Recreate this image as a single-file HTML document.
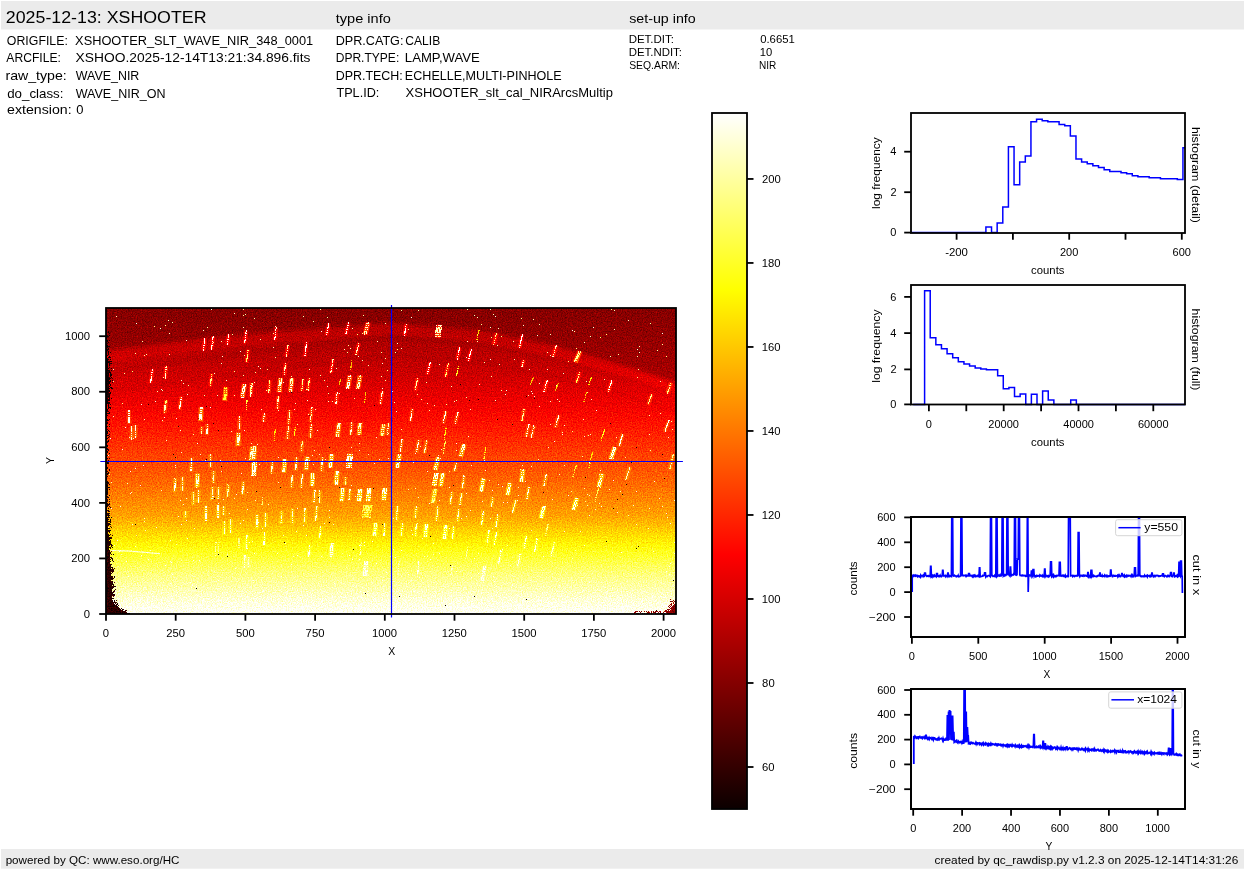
<!DOCTYPE html><html><head><meta charset="utf-8"><style>html,body{margin:0;padding:0;background:#fff;overflow:hidden}svg{display:block;will-change:transform}text{font-family:"Liberation Sans",sans-serif}</style></head><body>
<svg width="1245" height="870" viewBox="0 0 1245 870">
<rect x="0" y="0" width="1245" height="870" fill="#fff"/>
<rect x="1" y="1" width="1243" height="28.5" fill="#ebebeb"/>
<rect x="1" y="849" width="1243" height="19.7" fill="#ebebeb"/>
<text transform="translate(5.81,22.70) scale(1.0471,1)" font-size="17.00" fill="#000">2025-12-13: XSHOOTER</text>
<text transform="translate(335.78,22.80) scale(1.1548,1)" font-size="12.60" fill="#000">type info</text>
<text transform="translate(629.21,22.50) scale(1.1318,1)" font-size="12.60" fill="#000">set-up info</text>
<text transform="translate(6.86,45.20) scale(0.9798,1)" font-size="12.60" fill="#000">ORIGFILE:</text>
<text transform="translate(6.37,61.50) scale(0.9616,1)" font-size="12.60" fill="#000">ARCFILE:</text>
<text transform="translate(5.44,80.20) scale(1.1247,1)" font-size="12.60" fill="#000">raw_type:</text>
<text transform="translate(7.13,98.00) scale(1.0588,1)" font-size="12.60" fill="#000">do_class:</text>
<text transform="translate(7.10,113.60) scale(1.1246,1)" font-size="12.60" fill="#000">extension:</text>
<text transform="translate(75.11,45.20) scale(1.0172,1)" font-size="12.60" fill="#000">XSHOOTER_SLT_WAVE_NIR_348_0001</text>
<text transform="translate(75.49,61.50) scale(1.0964,1)" font-size="12.60" fill="#000">XSHOO.2025-12-14T13:21:34.896.fits</text>
<text transform="translate(75.74,80.20) scale(0.9881,1)" font-size="12.60" fill="#000">WAVE_NIR</text>
<text transform="translate(75.74,98.00) scale(0.9943,1)" font-size="12.60" fill="#000">WAVE_NIR_ON</text>
<text transform="translate(76.18,113.60) scale(1.0305,1)" font-size="12.60" fill="#000">0</text>
<text transform="translate(335.66,44.80) scale(1.0017,1)" font-size="12.60" fill="#000">DPR.CATG:</text>
<text transform="translate(335.71,61.90) scale(0.9561,1)" font-size="12.60" fill="#000">DPR.TYPE:</text>
<text transform="translate(335.67,80.00) scale(0.9903,1)" font-size="12.60" fill="#000">DPR.TECH:</text>
<text transform="translate(336.42,96.60) scale(1.0049,1)" font-size="12.60" fill="#000">TPL.ID:</text>
<text transform="translate(405.30,44.80) scale(0.9595,1)" font-size="12.60" fill="#000">CALIB</text>
<text transform="translate(404.81,61.90) scale(1.0454,1)" font-size="12.60" fill="#000">LAMP,WAVE</text>
<text transform="translate(404.86,80.00) scale(0.9978,1)" font-size="12.60" fill="#000">ECHELLE,MULTI-PINHOLE</text>
<text transform="translate(405.61,96.60) scale(1.0317,1)" font-size="12.60" fill="#000">XSHOOTER_slt_cal_NIRArcsMultip</text>
<text transform="translate(628.65,43.10) scale(1.0487,1)" font-size="10.97" fill="#000">DET.DIT:</text>
<text transform="translate(628.66,56.10) scale(1.0424,1)" font-size="10.97" fill="#000">DET.NDIT:</text>
<text transform="translate(629.13,68.90) scale(0.9490,1)" font-size="10.97" fill="#000">SEQ.ARM:</text>
<text transform="translate(760.15,43.10) scale(1.0343,1)" font-size="10.97" fill="#000">0.6651</text>
<text transform="translate(759.76,56.10) scale(1.0235,1)" font-size="10.97" fill="#000">10</text>
<text transform="translate(758.97,68.90) scale(0.9159,1)" font-size="10.97" fill="#000">NIR</text>
<text transform="translate(5.64,864.10) scale(1.0029,1)" font-size="11.60" fill="#000">powered by QC: www.eso.org/HC</text>
<text transform="translate(934.60,864.00) scale(1.0223,1)" font-size="11.60" fill="#000">created by qc_rawdisp.py v1.2.3 on 2025-12-14T14:31:26</text>
<defs>
<linearGradient id="gimg" x1="0" y1="0" x2="0" y2="1">
<stop offset="0.0014" stop-color="#343434"/>
<stop offset="0.1112" stop-color="#3e3e3e"/>
<stop offset="0.2247" stop-color="#4b4b4b"/>
<stop offset="0.3373" stop-color="#5c5c5c"/>
<stop offset="0.4508" stop-color="#707070"/>
<stop offset="0.5642" stop-color="#838383"/>
<stop offset="0.6777" stop-color="#9b9b9b"/>
<stop offset="0.8184" stop-color="#cdcdcd"/>
<stop offset="0.8729" stop-color="#dfdfdf"/>
<stop offset="0.9546" stop-color="#f5f5f5"/>
<stop offset="1.0000" stop-color="#ffffff"/>
</linearGradient>
<linearGradient id="gcb" x1="0" y1="1" x2="0" y2="0">
<stop offset="0" stop-color="#0b0000"/>
<stop offset="0.365079" stop-color="#ff0000"/>
<stop offset="0.746032" stop-color="#ffff00"/>
<stop offset="1" stop-color="#ffffff"/>
</linearGradient>
<clipPath id="cimg"><rect x="106.0" y="308.0" width="570.0" height="306.0"/></clipPath>
<filter id="hotmap" filterUnits="userSpaceOnUse" x="106.0" y="308.0" width="570.0" height="306.0" color-interpolation-filters="sRGB">
<feTurbulence type="fractalNoise" baseFrequency="0.8" numOctaves="2" seed="4" result="noise"/>
<feColorMatrix in="noise" type="matrix" values="1 0 0 0 0 1 0 0 0 0 1 0 0 0 0 0 0 0 0 1" result="gn"/>
<feComposite in="SourceGraphic" in2="gn" operator="arithmetic" k1="0" k2="1" k3="0.24" k4="-0.12" result="val"/>
<feComponentTransfer in="val">
<feFuncR type="table" tableValues="0.0416 0.05189 0.06219 0.07248 0.08278 0.09307 0.1034 0.1137 0.124 0.1343 0.1445 0.1548 0.1651 0.1754 0.1857 0.196 0.2063 0.2166 0.2269 0.2372 0.2475 0.2578 0.2681 0.2784 0.2887 0.299 0.3093 0.3196 0.3299 0.3402 0.3504 0.3607 0.371 0.3813 0.3916 0.4019 0.4122 0.4225 0.4328 0.4431 0.4534 0.4637 0.474 0.4843 0.4946 0.5049 0.5152 0.5255 0.5358 0.546 0.5563 0.5666 0.5769 0.5872 0.5975 0.6078 0.6181 0.6284 0.6387 0.649 0.6593 0.6696 0.6799 0.6902 0.7005 0.7108 0.7211 0.7314 0.7416 0.7519 0.7622 0.7725 0.7828 0.7931 0.8034 0.8137 0.824 0.8343 0.8446 0.8549 0.8652 0.8755 0.8858 0.8961 0.9064 0.9167 0.927 0.9373 0.9475 0.9578 0.9681 0.9784 0.9887 0.999 1 1 1 1 1 1 1 1 1 1 1 1 1 1 1 1 1 1 1 1 1 1 1 1 1 1 1 1 1 1 1 1 1 1 1 1 1 1 1 1 1 1 1 1 1 1 1 1 1 1 1 1 1 1 1 1 1 1 1 1 1 1 1 1 1 1 1 1 1 1 1 1 1 1 1 1 1 1 1 1 1 1 1 1 1 1 1 1 1 1 1 1 1 1 1 1 1 1 1 1 1 1 1 1 1 1 1 1 1 1 1 1 1 1 1 1 1 1 1 1 1 1 1 1 1 1 1 1 1 1 1 1 1 1 1 1 1 1 1 1 1 1 1 1 1 1 1 1 1 1 1 1 1 1 1 1 1 1 1 1 1 1"/>
<feFuncG type="table" tableValues="0 0 0 0 0 0 0 0 0 0 0 0 0 0 0 0 0 0 0 0 0 0 0 0 0 0 0 0 0 0 0 0 0 0 0 0 0 0 0 0 0 0 0 0 0 0 0 0 0 0 0 0 0 0 0 0 0 0 0 0 0 0 0 0 0 0 0 0 0 0 0 0 0 0 0 0 0 0 0 0 0 0 0 0 0 0 0 0 0 0 0 0 0 0 0.009315 0.01961 0.0299 0.0402 0.05049 0.06079 0.07108 0.08137 0.09167 0.102 0.1123 0.1225 0.1328 0.1431 0.1534 0.1637 0.174 0.1843 0.1946 0.2049 0.2152 0.2255 0.2358 0.2461 0.2564 0.2667 0.277 0.2873 0.2975 0.3078 0.3181 0.3284 0.3387 0.349 0.3593 0.3696 0.3799 0.3902 0.4005 0.4108 0.4211 0.4314 0.4417 0.452 0.4623 0.4725 0.4828 0.4931 0.5034 0.5137 0.524 0.5343 0.5446 0.5549 0.5652 0.5755 0.5858 0.5961 0.6064 0.6167 0.627 0.6373 0.6475 0.6578 0.6681 0.6784 0.6887 0.699 0.7093 0.7196 0.7299 0.7402 0.7505 0.7608 0.7711 0.7814 0.7917 0.802 0.8123 0.8225 0.8328 0.8431 0.8534 0.8637 0.874 0.8843 0.8946 0.9049 0.9152 0.9255 0.9358 0.9461 0.9564 0.9667 0.977 0.9873 0.9975 1 1 1 1 1 1 1 1 1 1 1 1 1 1 1 1 1 1 1 1 1 1 1 1 1 1 1 1 1 1 1 1 1 1 1 1 1 1 1 1 1 1 1 1 1 1 1 1 1 1 1 1 1 1 1 1 1 1 1 1 1 1 1 1 1"/>
<feFuncB type="table" tableValues="0 0 0 0 0 0 0 0 0 0 0 0 0 0 0 0 0 0 0 0 0 0 0 0 0 0 0 0 0 0 0 0 0 0 0 0 0 0 0 0 0 0 0 0 0 0 0 0 0 0 0 0 0 0 0 0 0 0 0 0 0 0 0 0 0 0 0 0 0 0 0 0 0 0 0 0 0 0 0 0 0 0 0 0 0 0 0 0 0 0 0 0 0 0 0 0 0 0 0 0 0 0 0 0 0 0 0 0 0 0 0 0 0 0 0 0 0 0 0 0 0 0 0 0 0 0 0 0 0 0 0 0 0 0 0 0 0 0 0 0 0 0 0 0 0 0 0 0 0 0 0 0 0 0 0 0 0 0 0 0 0 0 0 0 0 0 0 0 0 0 0 0 0 0 0 0 0 0 0 0 0 0 0 0 0 0 0 0 0 0 0 0.01176 0.0272 0.04265 0.05809 0.07353 0.08897 0.1044 0.1199 0.1353 0.1507 0.1662 0.1816 0.1971 0.2125 0.2279 0.2434 0.2588 0.2743 0.2897 0.3051 0.3206 0.336 0.3515 0.3669 0.3824 0.3978 0.4132 0.4287 0.4441 0.4596 0.475 0.4904 0.5059 0.5213 0.5368 0.5522 0.5676 0.5831 0.5985 0.614 0.6294 0.6449 0.6603 0.6757 0.6912 0.7066 0.7221 0.7375 0.7529 0.7684 0.7838 0.7993 0.8147 0.8301 0.8456 0.861 0.8765 0.8919 0.9074 0.9228 0.9382 0.9537 0.9691 0.9846 1"/>
</feComponentTransfer>
</filter>
<filter id="blur1" x="-20%" y="-50%" width="140%" height="200%"><feGaussianBlur stdDeviation="1.5"/></filter>
<filter id="blur3" x="-20%" y="-50%" width="140%" height="200%"><feGaussianBlur stdDeviation="2.5"/></filter>
</defs>
<g clip-path="url(#cimg)"><g filter="url(#hotmap)">
<rect x="106.0" y="308.0" width="570.0" height="306.0" fill="url(#gimg)"/>
<path d="M90,300 L90,352 L106,350 L196,339 L275,331 L391,322 L481,330 L554,345 L626,366 L676,382 L690,390 L690,300 Z" fill="#282828" fill-opacity="0.4" filter="url(#blur1)"/>
<path d="M90,359 L106,357 L196,346 L275,338 L391,329 L481,337 L554,352 L626,373 L676,389 L690,397" fill="none" stroke="#fff" stroke-opacity="0.045" stroke-width="11" filter="url(#blur1)"/>
<path d="M90,374 L106,372 L196,360 L275,350 L391,337 L481,344 L554,359 L626,378 L676,394 L690,400" fill="none" stroke="#000" stroke-opacity="0.06" stroke-width="4" filter="url(#blur1)"/>
<path d="M90.0,394.0 L106.0,391.9 L196.0,379.5 L275.0,369.1 L391.0,355.5 L481.0,362.0 L554.0,376.7 L626.0,395.3 L676.0,411.1 L690.0,417.0" fill="none" stroke="#000" stroke-opacity="0.04" stroke-width="4" filter="url(#blur1)"/>
<path d="M106,330h1v1h-1zM106,331h1v1h-1zM108,331h1v1h-1zM108,332h1v1h-1zM106,333h1v1h-1zM109,333h1v1h-1zM106,335h1v1h-1zM107,335h1v1h-1zM109,335h1v1h-1zM106,336h1v1h-1zM107,336h1v1h-1zM108,336h1v1h-1zM106,337h1v1h-1zM106,338h1v1h-1zM106,340h1v1h-1zM107,340h1v1h-1zM109,340h1v1h-1zM107,341h1v1h-1zM108,342h1v1h-1zM107,343h1v1h-1zM106,344h1v1h-1zM106,345h1v1h-1zM107,345h1v1h-1zM106,346h1v1h-1zM107,346h1v1h-1zM108,346h1v1h-1zM109,346h1v1h-1zM107,347h1v1h-1zM106,348h1v1h-1zM108,348h1v1h-1zM106,349h1v1h-1zM107,349h1v1h-1zM108,349h1v1h-1zM106,350h1v1h-1zM107,350h1v1h-1zM106,351h1v1h-1zM108,351h1v1h-1zM106,352h1v1h-1zM108,352h1v1h-1zM110,352h1v1h-1zM106,353h1v1h-1zM108,353h1v1h-1zM106,354h1v1h-1zM108,354h1v1h-1zM106,355h1v1h-1zM107,355h1v1h-1zM106,356h1v1h-1zM109,356h1v1h-1zM106,357h1v1h-1zM108,357h1v1h-1zM109,357h1v1h-1zM110,357h1v1h-1zM106,358h1v1h-1zM107,358h1v1h-1zM106,359h1v1h-1zM107,359h1v1h-1zM108,359h1v1h-1zM110,359h1v1h-1zM106,360h1v1h-1zM107,360h1v1h-1zM106,361h1v1h-1zM107,361h1v1h-1zM108,361h1v1h-1zM109,361h1v1h-1zM110,361h1v1h-1zM111,361h1v1h-1zM106,362h1v1h-1zM107,362h1v1h-1zM108,362h1v1h-1zM109,362h1v1h-1zM106,363h1v1h-1zM107,363h1v1h-1zM109,363h1v1h-1zM110,363h1v1h-1zM111,363h1v1h-1zM106,364h1v1h-1zM107,364h1v1h-1zM109,364h1v1h-1zM106,365h1v1h-1zM107,365h1v1h-1zM109,365h1v1h-1zM106,366h1v1h-1zM107,366h1v1h-1zM106,367h1v1h-1zM107,367h1v1h-1zM109,367h1v1h-1zM106,368h1v1h-1zM107,368h1v1h-1zM108,368h1v1h-1zM111,368h1v1h-1zM106,369h1v1h-1zM107,369h1v1h-1zM106,370h1v1h-1zM107,370h1v1h-1zM108,370h1v1h-1zM109,370h1v1h-1zM111,370h1v1h-1zM106,371h1v1h-1zM107,371h1v1h-1zM108,371h1v1h-1zM109,371h1v1h-1zM106,372h1v1h-1zM107,372h1v1h-1zM108,372h1v1h-1zM109,372h1v1h-1zM110,372h1v1h-1zM106,373h1v1h-1zM107,373h1v1h-1zM108,373h1v1h-1zM110,373h1v1h-1zM106,374h1v1h-1zM107,374h1v1h-1zM108,374h1v1h-1zM110,374h1v1h-1zM111,374h1v1h-1zM106,375h1v1h-1zM107,375h1v1h-1zM108,375h1v1h-1zM110,375h1v1h-1zM111,375h1v1h-1zM106,376h1v1h-1zM107,376h1v1h-1zM108,376h1v1h-1zM110,376h1v1h-1zM106,377h1v1h-1zM107,377h1v1h-1zM108,377h1v1h-1zM109,377h1v1h-1zM111,377h1v1h-1zM106,378h1v1h-1zM107,378h1v1h-1zM108,378h1v1h-1zM109,378h1v1h-1zM110,378h1v1h-1zM112,378h1v1h-1zM106,379h1v1h-1zM107,379h1v1h-1zM108,379h1v1h-1zM109,379h1v1h-1zM106,380h1v1h-1zM107,380h1v1h-1zM108,380h1v1h-1zM110,380h1v1h-1zM112,380h1v1h-1zM106,381h1v1h-1zM107,381h1v1h-1zM108,381h1v1h-1zM109,381h1v1h-1zM110,381h1v1h-1zM106,382h1v1h-1zM107,382h1v1h-1zM108,382h1v1h-1zM109,382h1v1h-1zM112,382h1v1h-1zM106,383h1v1h-1zM107,383h1v1h-1zM108,383h1v1h-1zM109,383h1v1h-1zM106,384h1v1h-1zM107,384h1v1h-1zM108,384h1v1h-1zM110,384h1v1h-1zM106,385h1v1h-1zM107,385h1v1h-1zM108,385h1v1h-1zM110,385h1v1h-1zM106,386h1v1h-1zM107,386h1v1h-1zM108,386h1v1h-1zM109,386h1v1h-1zM106,387h1v1h-1zM107,387h1v1h-1zM108,387h1v1h-1zM110,387h1v1h-1zM111,387h1v1h-1zM106,388h1v1h-1zM107,388h1v1h-1zM108,388h1v1h-1zM109,388h1v1h-1zM111,388h1v1h-1zM112,388h1v1h-1zM106,389h1v1h-1zM107,389h1v1h-1zM108,389h1v1h-1zM106,390h1v1h-1zM107,390h1v1h-1zM108,390h1v1h-1zM109,390h1v1h-1zM106,391h1v1h-1zM107,391h1v1h-1zM108,391h1v1h-1zM109,391h1v1h-1zM106,392h1v1h-1zM107,392h1v1h-1zM108,392h1v1h-1zM110,392h1v1h-1zM106,393h1v1h-1zM107,393h1v1h-1zM108,393h1v1h-1zM109,393h1v1h-1zM110,393h1v1h-1zM106,394h1v1h-1zM107,394h1v1h-1zM108,394h1v1h-1zM109,394h1v1h-1zM106,395h1v1h-1zM107,395h1v1h-1zM108,395h1v1h-1zM109,395h1v1h-1zM106,396h1v1h-1zM107,396h1v1h-1zM108,396h1v1h-1zM109,396h1v1h-1zM106,397h1v1h-1zM107,397h1v1h-1zM108,397h1v1h-1zM109,397h1v1h-1zM106,398h1v1h-1zM107,398h1v1h-1zM109,398h1v1h-1zM111,398h1v1h-1zM106,399h1v1h-1zM107,399h1v1h-1zM108,399h1v1h-1zM109,399h1v1h-1zM106,400h1v1h-1zM107,400h1v1h-1zM108,400h1v1h-1zM109,400h1v1h-1zM106,401h1v1h-1zM107,401h1v1h-1zM106,402h1v1h-1zM107,402h1v1h-1zM108,402h1v1h-1zM109,402h1v1h-1zM106,403h1v1h-1zM107,403h1v1h-1zM108,403h1v1h-1zM109,403h1v1h-1zM106,404h1v1h-1zM108,404h1v1h-1zM110,404h1v1h-1zM106,405h1v1h-1zM108,405h1v1h-1zM106,406h1v1h-1zM108,406h1v1h-1zM106,407h1v1h-1zM108,407h1v1h-1zM109,407h1v1h-1zM110,407h1v1h-1zM106,408h1v1h-1zM108,408h1v1h-1zM110,408h1v1h-1zM106,409h1v1h-1zM107,409h1v1h-1zM106,410h1v1h-1zM107,410h1v1h-1zM106,411h1v1h-1zM107,411h1v1h-1zM108,411h1v1h-1zM106,412h1v1h-1zM109,412h1v1h-1zM106,413h1v1h-1zM107,413h1v1h-1zM108,413h1v1h-1zM109,413h1v1h-1zM106,414h1v1h-1zM107,415h1v1h-1zM107,419h1v1h-1zM109,419h1v1h-1zM106,420h1v1h-1zM107,420h1v1h-1zM108,420h1v1h-1zM107,422h1v1h-1zM106,423h1v1h-1zM107,423h1v1h-1zM109,424h1v1h-1zM106,426h1v1h-1zM107,426h1v1h-1zM109,426h1v1h-1zM106,427h1v1h-1zM107,429h1v1h-1zM106,430h1v1h-1zM108,430h1v1h-1zM106,431h1v1h-1zM107,431h1v1h-1zM109,431h1v1h-1zM107,432h1v1h-1zM106,433h1v1h-1zM107,433h1v1h-1zM106,434h1v1h-1zM109,434h1v1h-1zM106,435h1v1h-1zM107,435h1v1h-1zM108,435h1v1h-1zM106,436h1v1h-1zM109,436h1v1h-1zM108,437h1v1h-1zM106,438h1v1h-1zM107,438h1v1h-1zM106,439h1v1h-1zM108,440h1v1h-1zM106,441h1v1h-1zM107,441h1v1h-1zM108,441h1v1h-1zM106,442h1v1h-1zM107,442h1v1h-1zM106,443h1v1h-1zM106,444h1v1h-1zM106,445h1v1h-1zM107,445h1v1h-1zM107,446h1v1h-1zM106,448h1v1h-1zM107,448h1v1h-1zM107,449h1v1h-1zM108,449h1v1h-1zM106,450h1v1h-1zM108,450h1v1h-1zM106,451h1v1h-1zM107,451h1v1h-1zM107,452h1v1h-1zM106,453h1v1h-1zM109,453h1v1h-1zM106,454h1v1h-1zM106,455h1v1h-1zM107,455h1v1h-1zM106,456h1v1h-1zM106,457h1v1h-1zM106,458h1v1h-1zM107,458h1v1h-1zM109,458h1v1h-1zM106,459h1v1h-1zM106,460h1v1h-1zM108,460h1v1h-1zM107,461h1v1h-1zM107,462h1v1h-1zM108,462h1v1h-1zM107,463h1v1h-1zM108,463h1v1h-1zM106,465h1v1h-1zM106,466h1v1h-1zM106,467h1v1h-1zM107,467h1v1h-1zM106,468h1v1h-1zM107,468h1v1h-1zM106,469h1v1h-1zM109,469h1v1h-1zM109,470h1v1h-1zM106,471h1v1h-1zM107,471h1v1h-1zM108,472h1v1h-1zM107,473h1v1h-1zM108,473h1v1h-1zM107,474h1v1h-1zM109,474h1v1h-1zM107,476h1v1h-1zM106,477h1v1h-1zM106,478h1v1h-1zM106,479h1v1h-1zM107,481h1v1h-1zM106,482h1v1h-1zM107,482h1v1h-1zM108,482h1v1h-1zM107,483h1v1h-1zM108,483h1v1h-1zM106,484h1v1h-1zM107,484h1v1h-1zM109,484h1v1h-1zM106,485h1v1h-1zM107,485h1v1h-1zM106,486h1v1h-1zM107,486h1v1h-1zM107,487h1v1h-1zM108,487h1v1h-1zM109,487h1v1h-1zM106,488h1v1h-1zM107,488h1v1h-1zM106,489h1v1h-1zM107,489h1v1h-1zM109,489h1v1h-1zM107,490h1v1h-1zM106,491h1v1h-1zM107,491h1v1h-1zM106,492h1v1h-1zM107,492h1v1h-1zM106,493h1v1h-1zM107,493h1v1h-1zM106,494h1v1h-1zM107,494h1v1h-1zM109,495h1v1h-1zM106,496h1v1h-1zM107,496h1v1h-1zM107,497h1v1h-1zM108,497h1v1h-1zM106,498h1v1h-1zM107,499h1v1h-1zM109,499h1v1h-1zM107,500h1v1h-1zM106,501h1v1h-1zM107,501h1v1h-1zM109,501h1v1h-1zM106,502h1v1h-1zM106,503h1v1h-1zM107,503h1v1h-1zM109,503h1v1h-1zM106,504h1v1h-1zM107,504h1v1h-1zM108,504h1v1h-1zM109,504h1v1h-1zM106,505h1v1h-1zM107,505h1v1h-1zM108,505h1v1h-1zM106,506h1v1h-1zM107,506h1v1h-1zM109,506h1v1h-1zM106,507h1v1h-1zM110,507h1v1h-1zM106,508h1v1h-1zM108,508h1v1h-1zM106,509h1v1h-1zM106,510h1v1h-1zM107,510h1v1h-1zM108,510h1v1h-1zM106,511h1v1h-1zM108,511h1v1h-1zM109,511h1v1h-1zM106,512h1v1h-1zM106,513h1v1h-1zM107,513h1v1h-1zM108,513h1v1h-1zM109,513h1v1h-1zM106,514h1v1h-1zM107,514h1v1h-1zM108,514h1v1h-1zM106,515h1v1h-1zM107,515h1v1h-1zM108,515h1v1h-1zM109,515h1v1h-1zM106,516h1v1h-1zM108,516h1v1h-1zM106,517h1v1h-1zM107,517h1v1h-1zM108,517h1v1h-1zM109,517h1v1h-1zM111,517h1v1h-1zM106,518h1v1h-1zM107,518h1v1h-1zM106,519h1v1h-1zM107,519h1v1h-1zM108,519h1v1h-1zM110,519h1v1h-1zM106,520h1v1h-1zM107,520h1v1h-1zM110,520h1v1h-1zM106,521h1v1h-1zM107,521h1v1h-1zM108,521h1v1h-1zM109,521h1v1h-1zM110,521h1v1h-1zM106,522h1v1h-1zM107,522h1v1h-1zM110,522h1v1h-1zM106,523h1v1h-1zM107,523h1v1h-1zM108,523h1v1h-1zM109,523h1v1h-1zM106,524h1v1h-1zM107,524h1v1h-1zM108,524h1v1h-1zM109,524h1v1h-1zM110,524h1v1h-1zM106,525h1v1h-1zM107,525h1v1h-1zM108,525h1v1h-1zM106,526h1v1h-1zM107,526h1v1h-1zM110,526h1v1h-1zM106,527h1v1h-1zM107,527h1v1h-1zM108,527h1v1h-1zM111,527h1v1h-1zM106,528h1v1h-1zM107,528h1v1h-1zM108,528h1v1h-1zM109,528h1v1h-1zM106,529h1v1h-1zM107,529h1v1h-1zM106,530h1v1h-1zM107,530h1v1h-1zM108,530h1v1h-1zM109,530h1v1h-1zM110,530h1v1h-1zM106,531h1v1h-1zM107,531h1v1h-1zM108,531h1v1h-1zM109,531h1v1h-1zM106,532h1v1h-1zM107,532h1v1h-1zM109,532h1v1h-1zM106,533h1v1h-1zM107,533h1v1h-1zM106,534h1v1h-1zM107,534h1v1h-1zM108,534h1v1h-1zM110,534h1v1h-1zM106,535h1v1h-1zM107,535h1v1h-1zM108,535h1v1h-1zM109,535h1v1h-1zM112,535h1v1h-1zM106,536h1v1h-1zM107,536h1v1h-1zM108,536h1v1h-1zM106,537h1v1h-1zM107,537h1v1h-1zM108,537h1v1h-1zM109,537h1v1h-1zM110,537h1v1h-1zM111,537h1v1h-1zM106,538h1v1h-1zM107,538h1v1h-1zM108,538h1v1h-1zM109,538h1v1h-1zM110,538h1v1h-1zM111,538h1v1h-1zM106,539h1v1h-1zM107,539h1v1h-1zM108,539h1v1h-1zM109,539h1v1h-1zM106,540h1v1h-1zM107,540h1v1h-1zM108,540h1v1h-1zM110,540h1v1h-1zM106,541h1v1h-1zM107,541h1v1h-1zM108,541h1v1h-1zM109,541h1v1h-1zM110,541h1v1h-1zM106,542h1v1h-1zM107,542h1v1h-1zM108,542h1v1h-1zM109,542h1v1h-1zM110,542h1v1h-1zM106,543h1v1h-1zM107,543h1v1h-1zM108,543h1v1h-1zM109,543h1v1h-1zM110,543h1v1h-1zM106,544h1v1h-1zM107,544h1v1h-1zM108,544h1v1h-1zM109,544h1v1h-1zM110,544h1v1h-1zM111,544h1v1h-1zM106,545h1v1h-1zM107,545h1v1h-1zM108,545h1v1h-1zM109,545h1v1h-1zM111,545h1v1h-1zM112,545h1v1h-1zM106,546h1v1h-1zM107,546h1v1h-1zM108,546h1v1h-1zM111,546h1v1h-1zM106,547h1v1h-1zM107,547h1v1h-1zM108,547h1v1h-1zM109,547h1v1h-1zM110,547h1v1h-1zM112,547h1v1h-1zM106,548h1v1h-1zM107,548h1v1h-1zM108,548h1v1h-1zM110,548h1v1h-1zM106,549h1v1h-1zM107,549h1v1h-1zM108,549h1v1h-1zM106,550h1v1h-1zM107,550h1v1h-1zM108,550h1v1h-1zM109,550h1v1h-1zM110,550h1v1h-1zM111,550h1v1h-1zM106,551h1v1h-1zM107,551h1v1h-1zM108,551h1v1h-1zM109,551h1v1h-1zM111,551h1v1h-1zM106,552h1v1h-1zM107,552h1v1h-1zM108,552h1v1h-1zM109,552h1v1h-1zM110,552h1v1h-1zM106,553h1v1h-1zM107,553h1v1h-1zM108,553h1v1h-1zM109,553h1v1h-1zM110,553h1v1h-1zM106,554h1v1h-1zM107,554h1v1h-1zM108,554h1v1h-1zM109,554h1v1h-1zM111,554h1v1h-1zM113,554h1v1h-1zM106,555h1v1h-1zM107,555h1v1h-1zM108,555h1v1h-1zM109,555h1v1h-1zM106,556h1v1h-1zM107,556h1v1h-1zM108,556h1v1h-1zM109,556h1v1h-1zM106,557h1v1h-1zM107,557h1v1h-1zM108,557h1v1h-1zM109,557h1v1h-1zM110,557h1v1h-1zM111,557h1v1h-1zM106,558h1v1h-1zM107,558h1v1h-1zM108,558h1v1h-1zM109,558h1v1h-1zM111,558h1v1h-1zM112,558h1v1h-1zM106,559h1v1h-1zM107,559h1v1h-1zM108,559h1v1h-1zM109,559h1v1h-1zM110,559h1v1h-1zM112,559h1v1h-1zM106,560h1v1h-1zM107,560h1v1h-1zM108,560h1v1h-1zM109,560h1v1h-1zM112,560h1v1h-1zM106,561h1v1h-1zM107,561h1v1h-1zM108,561h1v1h-1zM109,561h1v1h-1zM110,561h1v1h-1zM113,561h1v1h-1zM106,562h1v1h-1zM107,562h1v1h-1zM108,562h1v1h-1zM109,562h1v1h-1zM111,562h1v1h-1zM106,563h1v1h-1zM107,563h1v1h-1zM108,563h1v1h-1zM109,563h1v1h-1zM106,564h1v1h-1zM107,564h1v1h-1zM108,564h1v1h-1zM109,564h1v1h-1zM110,564h1v1h-1zM111,564h1v1h-1zM106,565h1v1h-1zM107,565h1v1h-1zM108,565h1v1h-1zM109,565h1v1h-1zM110,565h1v1h-1zM106,566h1v1h-1zM107,566h1v1h-1zM108,566h1v1h-1zM109,566h1v1h-1zM110,566h1v1h-1zM106,567h1v1h-1zM107,567h1v1h-1zM108,567h1v1h-1zM109,567h1v1h-1zM110,567h1v1h-1zM111,567h1v1h-1zM112,567h1v1h-1zM106,568h1v1h-1zM107,568h1v1h-1zM108,568h1v1h-1zM109,568h1v1h-1zM110,568h1v1h-1zM112,568h1v1h-1zM114,568h1v1h-1zM106,569h1v1h-1zM107,569h1v1h-1zM108,569h1v1h-1zM109,569h1v1h-1zM110,569h1v1h-1zM111,569h1v1h-1zM112,569h1v1h-1zM113,569h1v1h-1zM106,570h1v1h-1zM107,570h1v1h-1zM108,570h1v1h-1zM109,570h1v1h-1zM110,570h1v1h-1zM111,570h1v1h-1zM112,570h1v1h-1zM113,570h1v1h-1zM106,571h1v1h-1zM107,571h1v1h-1zM108,571h1v1h-1zM109,571h1v1h-1zM110,571h1v1h-1zM111,571h1v1h-1zM112,571h1v1h-1zM113,571h1v1h-1zM106,572h1v1h-1zM107,572h1v1h-1zM108,572h1v1h-1zM109,572h1v1h-1zM110,572h1v1h-1zM112,572h1v1h-1zM106,573h1v1h-1zM107,573h1v1h-1zM108,573h1v1h-1zM109,573h1v1h-1zM110,573h1v1h-1zM111,573h1v1h-1zM106,574h1v1h-1zM107,574h1v1h-1zM108,574h1v1h-1zM109,574h1v1h-1zM110,574h1v1h-1zM106,575h1v1h-1zM107,575h1v1h-1zM108,575h1v1h-1zM109,575h1v1h-1zM110,575h1v1h-1zM106,576h1v1h-1zM107,576h1v1h-1zM108,576h1v1h-1zM109,576h1v1h-1zM110,576h1v1h-1zM111,576h1v1h-1zM112,576h1v1h-1zM114,576h1v1h-1zM106,577h1v1h-1zM107,577h1v1h-1zM108,577h1v1h-1zM109,577h1v1h-1zM110,577h1v1h-1zM111,577h1v1h-1zM112,577h1v1h-1zM114,577h1v1h-1zM106,578h1v1h-1zM107,578h1v1h-1zM108,578h1v1h-1zM109,578h1v1h-1zM110,578h1v1h-1zM111,578h1v1h-1zM112,578h1v1h-1zM113,578h1v1h-1zM106,579h1v1h-1zM107,579h1v1h-1zM108,579h1v1h-1zM109,579h1v1h-1zM110,579h1v1h-1zM111,579h1v1h-1zM112,579h1v1h-1zM106,580h1v1h-1zM107,580h1v1h-1zM108,580h1v1h-1zM109,580h1v1h-1zM110,580h1v1h-1zM106,581h1v1h-1zM107,581h1v1h-1zM108,581h1v1h-1zM109,581h1v1h-1zM110,581h1v1h-1zM111,581h1v1h-1zM112,581h1v1h-1zM106,582h1v1h-1zM107,582h1v1h-1zM108,582h1v1h-1zM109,582h1v1h-1zM110,582h1v1h-1zM111,582h1v1h-1zM112,582h1v1h-1zM114,582h1v1h-1zM106,583h1v1h-1zM107,583h1v1h-1zM108,583h1v1h-1zM109,583h1v1h-1zM110,583h1v1h-1zM111,583h1v1h-1zM112,583h1v1h-1zM106,584h1v1h-1zM107,584h1v1h-1zM108,584h1v1h-1zM109,584h1v1h-1zM110,584h1v1h-1zM111,584h1v1h-1zM112,584h1v1h-1zM113,584h1v1h-1zM106,585h1v1h-1zM107,585h1v1h-1zM108,585h1v1h-1zM109,585h1v1h-1zM110,585h1v1h-1zM111,585h1v1h-1zM113,585h1v1h-1zM106,586h1v1h-1zM107,586h1v1h-1zM108,586h1v1h-1zM109,586h1v1h-1zM110,586h1v1h-1zM111,586h1v1h-1zM112,586h1v1h-1zM113,586h1v1h-1zM114,586h1v1h-1zM115,586h1v1h-1zM106,587h1v1h-1zM107,587h1v1h-1zM108,587h1v1h-1zM109,587h1v1h-1zM110,587h1v1h-1zM111,587h1v1h-1zM112,587h1v1h-1zM113,587h1v1h-1zM106,588h1v1h-1zM107,588h1v1h-1zM108,588h1v1h-1zM109,588h1v1h-1zM110,588h1v1h-1zM111,588h1v1h-1zM112,588h1v1h-1zM106,589h1v1h-1zM107,589h1v1h-1zM108,589h1v1h-1zM109,589h1v1h-1zM110,589h1v1h-1zM111,589h1v1h-1zM115,589h1v1h-1zM106,590h1v1h-1zM107,590h1v1h-1zM108,590h1v1h-1zM109,590h1v1h-1zM110,590h1v1h-1zM111,590h1v1h-1zM114,590h1v1h-1zM106,591h1v1h-1zM107,591h1v1h-1zM108,591h1v1h-1zM109,591h1v1h-1zM110,591h1v1h-1zM111,591h1v1h-1zM113,591h1v1h-1zM114,591h1v1h-1zM106,592h1v1h-1zM107,592h1v1h-1zM108,592h1v1h-1zM109,592h1v1h-1zM110,592h1v1h-1zM111,592h1v1h-1zM112,592h1v1h-1zM113,592h1v1h-1zM106,593h1v1h-1zM107,593h1v1h-1zM108,593h1v1h-1zM109,593h1v1h-1zM110,593h1v1h-1zM111,593h1v1h-1zM112,593h1v1h-1zM106,594h1v1h-1zM107,594h1v1h-1zM108,594h1v1h-1zM109,594h1v1h-1zM110,594h1v1h-1zM111,594h1v1h-1zM112,594h1v1h-1zM113,594h1v1h-1zM114,594h1v1h-1zM106,595h1v1h-1zM107,595h1v1h-1zM108,595h1v1h-1zM109,595h1v1h-1zM110,595h1v1h-1zM111,595h1v1h-1zM112,595h1v1h-1zM113,595h1v1h-1zM114,595h1v1h-1zM106,596h1v1h-1zM107,596h1v1h-1zM108,596h1v1h-1zM109,596h1v1h-1zM110,596h1v1h-1zM111,596h1v1h-1zM113,596h1v1h-1zM106,597h1v1h-1zM107,597h1v1h-1zM108,597h1v1h-1zM109,597h1v1h-1zM110,597h1v1h-1zM111,597h1v1h-1zM106,598h1v1h-1zM107,598h1v1h-1zM108,598h1v1h-1zM109,598h1v1h-1zM110,598h1v1h-1zM111,598h1v1h-1zM112,598h1v1h-1zM113,598h1v1h-1zM106,599h1v1h-1zM107,599h1v1h-1zM108,599h1v1h-1zM109,599h1v1h-1zM110,599h1v1h-1zM111,599h1v1h-1zM106,600h1v1h-1zM107,600h1v1h-1zM108,600h1v1h-1zM109,600h1v1h-1zM110,600h1v1h-1zM111,600h1v1h-1zM112,600h1v1h-1zM114,600h1v1h-1zM116,600h1v1h-1zM106,601h1v1h-1zM107,601h1v1h-1zM108,601h1v1h-1zM109,601h1v1h-1zM110,601h1v1h-1zM111,601h1v1h-1zM112,601h1v1h-1zM114,601h1v1h-1zM106,602h1v1h-1zM107,602h1v1h-1zM108,602h1v1h-1zM109,602h1v1h-1zM110,602h1v1h-1zM111,602h1v1h-1zM112,602h1v1h-1zM113,602h1v1h-1zM114,602h1v1h-1zM115,602h1v1h-1zM116,602h1v1h-1zM106,603h1v1h-1zM107,603h1v1h-1zM108,603h1v1h-1zM109,603h1v1h-1zM110,603h1v1h-1zM111,603h1v1h-1zM112,603h1v1h-1zM113,603h1v1h-1zM115,603h1v1h-1zM117,603h1v1h-1zM106,604h1v1h-1zM107,604h1v1h-1zM108,604h1v1h-1zM109,604h1v1h-1zM110,604h1v1h-1zM111,604h1v1h-1zM112,604h1v1h-1zM113,604h1v1h-1zM114,604h1v1h-1zM116,604h1v1h-1zM117,604h1v1h-1zM106,605h1v1h-1zM107,605h1v1h-1zM108,605h1v1h-1zM109,605h1v1h-1zM110,605h1v1h-1zM111,605h1v1h-1zM112,605h1v1h-1zM113,605h1v1h-1zM114,605h1v1h-1zM115,605h1v1h-1zM116,605h1v1h-1zM118,605h1v1h-1zM106,606h1v1h-1zM107,606h1v1h-1zM108,606h1v1h-1zM109,606h1v1h-1zM110,606h1v1h-1zM111,606h1v1h-1zM112,606h1v1h-1zM113,606h1v1h-1zM114,606h1v1h-1zM115,606h1v1h-1zM116,606h1v1h-1zM117,606h1v1h-1zM106,607h1v1h-1zM107,607h1v1h-1zM108,607h1v1h-1zM109,607h1v1h-1zM110,607h1v1h-1zM111,607h1v1h-1zM112,607h1v1h-1zM113,607h1v1h-1zM114,607h1v1h-1zM115,607h1v1h-1zM116,607h1v1h-1zM117,607h1v1h-1zM118,607h1v1h-1zM106,608h1v1h-1zM107,608h1v1h-1zM108,608h1v1h-1zM109,608h1v1h-1zM110,608h1v1h-1zM111,608h1v1h-1zM112,608h1v1h-1zM113,608h1v1h-1zM114,608h1v1h-1zM115,608h1v1h-1zM116,608h1v1h-1zM117,608h1v1h-1zM118,608h1v1h-1zM119,608h1v1h-1zM121,608h1v1h-1zM106,609h1v1h-1zM107,609h1v1h-1zM108,609h1v1h-1zM109,609h1v1h-1zM110,609h1v1h-1zM111,609h1v1h-1zM112,609h1v1h-1zM113,609h1v1h-1zM114,609h1v1h-1zM115,609h1v1h-1zM116,609h1v1h-1zM117,609h1v1h-1zM118,609h1v1h-1zM119,609h1v1h-1zM120,609h1v1h-1zM122,609h1v1h-1zM123,609h1v1h-1zM106,610h1v1h-1zM107,610h1v1h-1zM108,610h1v1h-1zM109,610h1v1h-1zM110,610h1v1h-1zM111,610h1v1h-1zM112,610h1v1h-1zM113,610h1v1h-1zM114,610h1v1h-1zM115,610h1v1h-1zM116,610h1v1h-1zM117,610h1v1h-1zM118,610h1v1h-1zM119,610h1v1h-1zM120,610h1v1h-1zM121,610h1v1h-1zM122,610h1v1h-1zM125,610h1v1h-1zM126,610h1v1h-1zM106,611h1v1h-1zM107,611h1v1h-1zM108,611h1v1h-1zM109,611h1v1h-1zM110,611h1v1h-1zM111,611h1v1h-1zM112,611h1v1h-1zM113,611h1v1h-1zM114,611h1v1h-1zM115,611h1v1h-1zM116,611h1v1h-1zM117,611h1v1h-1zM118,611h1v1h-1zM119,611h1v1h-1zM120,611h1v1h-1zM121,611h1v1h-1zM122,611h1v1h-1zM123,611h1v1h-1zM124,611h1v1h-1zM125,611h1v1h-1zM106,612h1v1h-1zM107,612h1v1h-1zM108,612h1v1h-1zM109,612h1v1h-1zM110,612h1v1h-1zM111,612h1v1h-1zM112,612h1v1h-1zM113,612h1v1h-1zM114,612h1v1h-1zM115,612h1v1h-1zM116,612h1v1h-1zM117,612h1v1h-1zM118,612h1v1h-1zM119,612h1v1h-1zM120,612h1v1h-1zM121,612h1v1h-1zM122,612h1v1h-1zM123,612h1v1h-1zM124,612h1v1h-1zM125,612h1v1h-1zM126,612h1v1h-1zM106,613h1v1h-1zM107,613h1v1h-1zM108,613h1v1h-1zM109,613h1v1h-1zM110,613h1v1h-1zM111,613h1v1h-1zM112,613h1v1h-1zM113,613h1v1h-1zM114,613h1v1h-1zM115,613h1v1h-1zM116,613h1v1h-1zM117,613h1v1h-1zM118,613h1v1h-1zM119,613h1v1h-1zM120,613h1v1h-1zM121,613h1v1h-1zM122,613h1v1h-1zM123,613h1v1h-1zM124,613h1v1h-1zM125,613h1v1h-1zM126,613h1v1h-1zM127,613h1v1h-1zM128,613h1v1h-1zM129,613h1v1h-1z" fill="#000" fill-opacity="0.95"/>
<path d="M670,599h1v1h-1zM675,599h1v1h-1zM673,600h1v1h-1zM675,600h1v1h-1zM670,601h1v1h-1zM671,601h1v1h-1zM672,601h1v1h-1zM674,601h1v1h-1zM675,601h1v1h-1zM673,602h1v1h-1zM675,602h1v1h-1zM671,603h1v1h-1zM673,603h1v1h-1zM675,603h1v1h-1zM670,604h1v1h-1zM671,604h1v1h-1zM674,604h1v1h-1zM675,604h1v1h-1zM669,605h1v1h-1zM671,605h1v1h-1zM673,605h1v1h-1zM674,605h1v1h-1zM675,605h1v1h-1zM668,606h1v1h-1zM670,606h1v1h-1zM672,606h1v1h-1zM673,606h1v1h-1zM674,606h1v1h-1zM675,606h1v1h-1zM669,607h1v1h-1zM671,607h1v1h-1zM672,607h1v1h-1zM673,607h1v1h-1zM674,607h1v1h-1zM675,607h1v1h-1zM670,608h1v1h-1zM671,608h1v1h-1zM672,608h1v1h-1zM673,608h1v1h-1zM674,608h1v1h-1zM675,608h1v1h-1zM667,609h1v1h-1zM668,609h1v1h-1zM669,609h1v1h-1zM671,609h1v1h-1zM672,609h1v1h-1zM673,609h1v1h-1zM674,609h1v1h-1zM675,609h1v1h-1zM665,610h1v1h-1zM666,610h1v1h-1zM668,610h1v1h-1zM670,610h1v1h-1zM671,610h1v1h-1zM672,610h1v1h-1zM673,610h1v1h-1zM674,610h1v1h-1zM675,610h1v1h-1zM664,611h1v1h-1zM665,611h1v1h-1zM667,611h1v1h-1zM668,611h1v1h-1zM669,611h1v1h-1zM670,611h1v1h-1zM671,611h1v1h-1zM672,611h1v1h-1zM673,611h1v1h-1zM674,611h1v1h-1zM675,611h1v1h-1zM663,612h1v1h-1zM666,612h1v1h-1zM667,612h1v1h-1zM668,612h1v1h-1zM669,612h1v1h-1zM670,612h1v1h-1zM671,612h1v1h-1zM672,612h1v1h-1zM673,612h1v1h-1zM674,612h1v1h-1zM675,612h1v1h-1zM664,613h1v1h-1zM667,613h1v1h-1zM668,613h1v1h-1zM669,613h1v1h-1zM670,613h1v1h-1zM671,613h1v1h-1zM672,613h1v1h-1zM673,613h1v1h-1zM674,613h1v1h-1zM675,613h1v1h-1zM634,612h1v1h-1zM634,613h1v1h-1zM635,611h1v1h-1zM635,612h1v1h-1zM636,611h1v1h-1zM636,613h1v1h-1zM637,611h1v1h-1zM637,613h1v1h-1zM638,613h1v1h-1zM639,611h1v1h-1zM640,612h1v1h-1zM641,611h1v1h-1zM642,613h1v1h-1zM644,611h1v1h-1zM644,613h1v1h-1zM646,611h1v1h-1zM646,613h1v1h-1zM647,612h1v1h-1zM647,613h1v1h-1zM648,611h1v1h-1zM648,612h1v1h-1zM648,613h1v1h-1zM649,612h1v1h-1zM649,613h1v1h-1zM651,611h1v1h-1zM651,612h1v1h-1zM651,613h1v1h-1zM653,611h1v1h-1zM653,612h1v1h-1zM654,612h1v1h-1zM655,611h1v1h-1zM655,612h1v1h-1zM655,613h1v1h-1zM656,611h1v1h-1zM657,611h1v1h-1zM657,613h1v1h-1zM658,612h1v1h-1zM659,611h1v1h-1zM659,613h1v1h-1zM660,611h1v1h-1zM660,612h1v1h-1zM660,613h1v1h-1zM661,613h1v1h-1zM662,613h1v1h-1zM663,612h1v1h-1zM664,611h1v1h-1zM664,613h1v1h-1zM665,611h1v1h-1zM666,611h1v1h-1zM666,612h1v1h-1zM667,611h1v1h-1zM667,613h1v1h-1zM669,612h1v1h-1zM669,613h1v1h-1zM670,611h1v1h-1zM670,613h1v1h-1zM671,611h1v1h-1zM671,613h1v1h-1zM673,611h1v1h-1zM673,612h1v1h-1zM674,613h1v1h-1zM675,612h1v1h-1zM675,613h1v1h-1z" fill="#000" fill-opacity="0.8"/>
<path d="M110,550.6 L130,551 L160,553.7" fill="none" stroke="#fff" stroke-width="1"/>
<path d="M369,492h1v1h-1zM650,323h1v1h-1zM584,436h1v1h-1zM161,389h1v1h-1zM223,499h1v1h-1zM588,435h1v1h-1zM497,587h1v1h-1zM212,602h1v1h-1zM363,315h1v1h-1zM329,517h1v1h-1zM394,402h1v1h-1zM506,390h1v1h-1zM181,380h1v1h-1zM563,373h1v1h-1zM243,309h1v1h-1zM113,416h1v1h-1zM328,393h1v1h-1zM278,457h1v1h-1zM429,410h1v1h-1zM660,413h1v1h-1zM294,409h1v1h-1zM500,461h1v1h-1zM130,493h1v1h-1zM532,393h1v1h-1zM257,444h1v1h-1zM174,478h1v1h-1zM416,609h1v1h-1zM111,482h1v1h-1zM175,467h1v1h-1zM471,465h1v1h-1zM600,470h1v1h-1zM297,555h1v1h-1zM591,399h1v1h-1zM166,440h1v1h-1zM131,492h1v1h-1zM521,318h1v1h-1zM670,523h1v1h-1zM482,501h1v1h-1zM117,540h1v1h-1zM155,401h1v1h-1zM309,369h1v1h-1zM359,545h1v1h-1zM460,571h1v1h-1zM471,577h1v1h-1zM364,545h1v1h-1zM218,610h1v1h-1zM484,460h1v1h-1zM145,530h1v1h-1zM201,415h1v1h-1zM456,571h1v1h-1zM479,384h1v1h-1zM456,450h1v1h-1zM666,356h1v1h-1zM427,471h1v1h-1zM421,399h1v1h-1zM188,385h1v1h-1zM424,556h1v1h-1zM273,333h1v1h-1zM190,582h1v1h-1zM523,325h1v1h-1zM351,485h1v1h-1zM364,542h1v1h-1zM539,383h1v1h-1zM165,325h1v1h-1zM613,480h1v1h-1zM320,375h1v1h-1zM243,520h1v1h-1zM217,395h1v1h-1zM552,499h1v1h-1zM260,339h1v1h-1zM538,459h1v1h-1zM252,541h1v1h-1zM281,576h1v1h-1zM572,558h1v1h-1zM433,554h1v1h-1zM388,458h1v1h-1zM589,515h1v1h-1zM258,366h1v1h-1zM494,581h1v1h-1zM291,564h1v1h-1zM454,401h1v1h-1zM199,560h1v1h-1zM386,572h1v1h-1zM669,566h1v1h-1zM477,341h1v1h-1zM472,609h1v1h-1zM143,465h1v1h-1zM480,595h1v1h-1zM395,557h1v1h-1zM379,459h1v1h-1zM456,400h1v1h-1zM119,551h1v1h-1zM668,437h1v1h-1zM441,449h1v1h-1zM582,456h1v1h-1zM620,491h1v1h-1zM464,449h1v1h-1zM461,518h1v1h-1zM466,397h1v1h-1zM568,495h1v1h-1zM450,574h1v1h-1zM253,580h1v1h-1zM278,410h1v1h-1zM478,553h1v1h-1zM397,349h1v1h-1zM534,396h1v1h-1zM636,524h1v1h-1zM417,592h1v1h-1zM385,323h1v1h-1zM308,390h1v1h-1zM559,401h1v1h-1zM332,401h1v1h-1zM150,550h1v1h-1zM339,393h1v1h-1zM163,377h1v1h-1zM221,471h1v1h-1zM293,556h1v1h-1zM306,589h1v1h-1zM144,521h1v1h-1zM584,488h1v1h-1zM497,345h1v1h-1zM317,430h1v1h-1zM490,309h1v1h-1zM466,516h1v1h-1zM393,518h1v1h-1zM225,589h1v1h-1zM490,327h1v1h-1zM671,463h1v1h-1zM205,460h1v1h-1zM666,571h1v1h-1zM455,606h1v1h-1zM408,489h1v1h-1zM240,523h1v1h-1zM527,597h1v1h-1zM659,498h1v1h-1zM586,381h1v1h-1zM268,504h1v1h-1zM596,410h1v1h-1zM244,355h1v1h-1zM467,309h1v1h-1zM499,364h1v1h-1zM441,598h1v1h-1zM660,381h1v1h-1zM441,597h1v1h-1zM492,528h1v1h-1zM550,424h1v1h-1zM613,458h1v1h-1zM599,503h1v1h-1zM501,390h1v1h-1zM374,463h1v1h-1zM616,437h1v1h-1zM533,319h1v1h-1zM434,466h1v1h-1zM611,455h1v1h-1zM254,553h1v1h-1zM132,371h1v1h-1zM562,434h1v1h-1zM408,329h1v1h-1zM247,509h1v1h-1zM121,554h1v1h-1zM653,595h1v1h-1zM388,433h1v1h-1zM593,327h1v1h-1zM359,559h1v1h-1zM382,388h1v1h-1zM400,459h1v1h-1zM612,552h1v1h-1zM638,369h1v1h-1zM124,373h1v1h-1zM415,453h1v1h-1zM654,481h1v1h-1zM411,580h1v1h-1zM135,546h1v1h-1zM466,493h1v1h-1zM243,327h1v1h-1zM110,438h1v1h-1zM674,542h1v1h-1zM218,588h1v1h-1zM303,316h1v1h-1zM547,527h1v1h-1zM601,506h1v1h-1zM595,509h1v1h-1zM309,460h1v1h-1zM584,342h1v1h-1zM418,310h1v1h-1zM551,607h1v1h-1zM401,550h1v1h-1zM426,382h1v1h-1zM277,553h1v1h-1zM670,563h1v1h-1zM446,584h1v1h-1zM265,526h1v1h-1zM662,333h1v1h-1zM178,426h1v1h-1zM381,352h1v1h-1zM172,322h1v1h-1zM449,528h1v1h-1zM178,516h1v1h-1zM606,334h1v1h-1zM234,371h1v1h-1zM332,365h1v1h-1zM245,458h1v1h-1zM556,385h1v1h-1zM295,403h1v1h-1zM531,391h1v1h-1zM176,418h1v1h-1zM152,593h1v1h-1zM218,503h1v1h-1zM181,452h1v1h-1zM166,601h1v1h-1zM229,513h1v1h-1zM245,314h1v1h-1zM550,355h1v1h-1zM430,559h1v1h-1zM609,489h1v1h-1zM491,337h1v1h-1zM249,459h1v1h-1zM262,600h1v1h-1zM625,457h1v1h-1zM671,421h1v1h-1zM377,341h1v1h-1zM672,429h1v1h-1zM368,454h1v1h-1zM637,377h1v1h-1zM348,499h1v1h-1zM572,508h1v1h-1zM291,376h1v1h-1zM127,483h1v1h-1zM195,602h1v1h-1zM144,355h1v1h-1zM235,568h1v1h-1zM572,431h1v1h-1zM507,545h1v1h-1zM599,474h1v1h-1zM218,580h1v1h-1zM138,586h1v1h-1zM501,336h1v1h-1zM262,528h1v1h-1zM336,368h1v1h-1zM193,560h1v1h-1zM324,380h1v1h-1zM492,490h1v1h-1zM348,457h1v1h-1zM449,487h1v1h-1zM503,502h1v1h-1zM247,492h1v1h-1zM411,530h1v1h-1zM478,573h1v1h-1zM145,612h1v1h-1zM328,401h1v1h-1zM513,341h1v1h-1zM207,327h1v1h-1zM141,404h1v1h-1zM315,409h1v1h-1zM148,559h1v1h-1zM600,487h1v1h-1zM108,527h1v1h-1zM589,462h1v1h-1zM546,474h1v1h-1zM584,545h1v1h-1zM210,407h1v1h-1zM266,390h1v1h-1zM180,500h1v1h-1zM502,549h1v1h-1zM263,591h1v1h-1zM368,365h1v1h-1zM392,391h1v1h-1zM401,429h1v1h-1zM141,555h1v1h-1zM140,485h1v1h-1zM485,470h1v1h-1zM168,320h1v1h-1zM575,550h1v1h-1zM267,369h1v1h-1zM440,458h1v1h-1zM572,431h1v1h-1zM275,326h1v1h-1zM313,321h1v1h-1zM344,349h1v1h-1zM518,495h1v1h-1zM427,403h1v1h-1zM587,494h1v1h-1zM397,343h1v1h-1zM587,392h1v1h-1zM354,398h1v1h-1zM321,331h1v1h-1zM548,447h1v1h-1zM114,545h1v1h-1zM170,540h1v1h-1zM528,395h1v1h-1zM154,326h1v1h-1zM669,574h1v1h-1zM466,357h1v1h-1zM180,430h1v1h-1zM610,356h1v1h-1zM590,336h1v1h-1zM357,334h1v1h-1zM617,512h1v1h-1zM169,333h1v1h-1zM369,517h1v1h-1zM564,465h1v1h-1zM160,328h1v1h-1zM307,400h1v1h-1zM628,515h1v1h-1zM300,581h1v1h-1zM347,352h1v1h-1zM429,364h1v1h-1zM196,586h1v1h-1zM273,347h1v1h-1zM327,317h1v1h-1zM559,585h1v1h-1zM474,558h1v1h-1zM541,601h1v1h-1zM493,576h1v1h-1zM243,315h1v1h-1zM422,538h1v1h-1zM337,592h1v1h-1zM226,380h1v1h-1zM427,556h1v1h-1zM197,443h1v1h-1zM520,469h1v1h-1zM243,375h1v1h-1zM657,350h1v1h-1zM590,434h1v1h-1zM194,528h1v1h-1zM359,450h1v1h-1zM170,561h1v1h-1zM362,333h1v1h-1zM312,455h1v1h-1zM490,359h1v1h-1zM181,524h1v1h-1zM429,503h1v1h-1zM108,455h1v1h-1zM242,603h1v1h-1zM136,535h1v1h-1zM254,318h1v1h-1zM156,527h1v1h-1zM382,363h1v1h-1zM499,596h1v1h-1zM241,473h1v1h-1zM175,465h1v1h-1zM281,379h1v1h-1zM376,563h1v1h-1zM438,455h1v1h-1zM142,341h1v1h-1zM663,594h1v1h-1zM136,323h1v1h-1zM232,334h1v1h-1zM241,491h1v1h-1zM554,441h1v1h-1zM125,427h1v1h-1zM648,528h1v1h-1zM236,494h1v1h-1zM314,478h1v1h-1zM474,315h1v1h-1zM275,608h1v1h-1zM275,357h1v1h-1zM382,580h1v1h-1zM283,382h1v1h-1zM564,531h1v1h-1zM547,369h1v1h-1zM449,471h1v1h-1zM564,425h1v1h-1zM580,531h1v1h-1zM283,535h1v1h-1zM157,391h1v1h-1zM653,551h1v1h-1zM611,309h1v1h-1zM214,373h1v1h-1zM537,335h1v1h-1zM320,309h1v1h-1zM141,604h1v1h-1zM349,555h1v1h-1zM470,510h1v1h-1zM583,419h1v1h-1zM314,450h1v1h-1zM313,464h1v1h-1zM636,491h1v1h-1zM355,496h1v1h-1zM468,436h1v1h-1zM171,562h1v1h-1zM518,487h1v1h-1zM254,382h1v1h-1zM352,559h1v1h-1zM498,328h1v1h-1zM204,395h1v1h-1zM514,359h1v1h-1zM396,411h1v1h-1zM439,553h1v1h-1zM589,582h1v1h-1zM201,410h1v1h-1zM493,314h1v1h-1zM214,571h1v1h-1zM297,508h1v1h-1zM130,471h1v1h-1zM135,468h1v1h-1zM633,505h1v1h-1zM621,552h1v1h-1zM666,513h1v1h-1zM568,605h1v1h-1zM170,583h1v1h-1zM258,522h1v1h-1zM479,612h1v1h-1zM128,576h1v1h-1zM319,454h1v1h-1zM401,348h1v1h-1zM135,353h1v1h-1zM472,606h1v1h-1zM531,466h1v1h-1zM122,449h1v1h-1zM348,345h1v1h-1zM146,354h1v1h-1zM415,488h1v1h-1zM321,556h1v1h-1zM637,356h1v1h-1zM231,431h1v1h-1zM458,587h1v1h-1zM541,510h1v1h-1zM111,508h1v1h-1zM495,400h1v1h-1zM649,415h1v1h-1zM437,506h1v1h-1zM439,364h1v1h-1zM674,500h1v1h-1zM362,360h1v1h-1zM325,459h1v1h-1zM420,446h1v1h-1zM187,394h1v1h-1zM186,520h1v1h-1zM297,424h1v1h-1zM172,600h1v1h-1zM667,517h1v1h-1zM534,427h1v1h-1zM543,556h1v1h-1zM649,434h1v1h-1zM417,523h1v1h-1zM395,352h1v1h-1zM446,404h1v1h-1zM539,324h1v1h-1zM260,368h1v1h-1zM410,597h1v1h-1zM296,531h1v1h-1zM302,475h1v1h-1zM212,478h1v1h-1zM186,340h1v1h-1zM604,379h1v1h-1zM639,346h1v1h-1zM434,405h1v1h-1zM587,505h1v1h-1zM342,553h1v1h-1zM211,309h1v1h-1zM306,389h1v1h-1zM222,356h1v1h-1zM451,386h1v1h-1zM484,362h1v1h-1zM559,474h1v1h-1zM295,590h1v1h-1zM213,496h1v1h-1zM213,342h1v1h-1zM308,414h1v1h-1zM439,500h1v1h-1zM285,543h1v1h-1zM193,434h1v1h-1zM520,587h1v1h-1zM585,501h1v1h-1zM113,369h1v1h-1zM491,376h1v1h-1zM111,562h1v1h-1zM498,484h1v1h-1zM181,560h1v1h-1zM411,317h1v1h-1zM227,554h1v1h-1zM470,409h1v1h-1zM459,504h1v1h-1zM253,457h1v1h-1zM618,354h1v1h-1zM220,460h1v1h-1zM525,481h1v1h-1zM172,574h1v1h-1zM550,334h1v1h-1zM333,524h1v1h-1zM351,447h1v1h-1zM183,383h1v1h-1zM385,358h1v1h-1zM674,553h1v1h-1zM550,401h1v1h-1zM662,506h1v1h-1zM358,356h1v1h-1zM571,491h1v1h-1zM240,351h1v1h-1zM113,381h1v1h-1zM477,317h1v1h-1zM129,437h1v1h-1zM577,505h1v1h-1zM637,349h1v1h-1zM162,420h1v1h-1zM306,535h1v1h-1zM120,550h1v1h-1zM639,352h1v1h-1zM393,549h1v1h-1zM628,320h1v1h-1zM162,390h1v1h-1zM510,565h1v1h-1zM553,612h1v1h-1zM144,419h1v1h-1zM132,524h1v1h-1zM531,530h1v1h-1zM495,316h1v1h-1zM278,482h1v1h-1zM259,464h1v1h-1zM303,525h1v1h-1zM186,498h1v1h-1zM329,510h1v1h-1zM539,406h1v1h-1zM385,380h1v1h-1zM589,495h1v1h-1zM401,310h1v1h-1zM234,395h1v1h-1zM576,348h1v1h-1zM183,504h1v1h-1zM144,518h1v1h-1zM261,409h1v1h-1zM126,561h1v1h-1zM433,543h1v1h-1zM247,548h1v1h-1zM350,348h1v1h-1zM481,324h1v1h-1zM122,403h1v1h-1zM547,352h1v1h-1zM381,376h1v1h-1zM489,480h1v1h-1zM327,386h1v1h-1zM408,574h1v1h-1zM200,454h1v1h-1zM221,363h1v1h-1zM517,500h1v1h-1zM418,497h1v1h-1zM597,589h1v1h-1zM562,432h1v1h-1zM251,443h1v1h-1zM125,588h1v1h-1zM120,506h1v1h-1zM244,430h1v1h-1zM600,337h1v1h-1zM116,316h1v1h-1zM324,523h1v1h-1zM346,567h1v1h-1zM349,466h1v1h-1zM165,565h1v1h-1zM352,328h1v1h-1zM502,486h1v1h-1zM129,594h1v1h-1zM412,534h1v1h-1zM568,361h1v1h-1zM234,498h1v1h-1zM650,450h1v1h-1zM507,502h1v1h-1zM417,394h1v1h-1zM187,538h1v1h-1zM164,417h1v1h-1zM649,508h1v1h-1zM208,571h1v1h-1zM414,591h1v1h-1zM490,518h1v1h-1zM249,542h1v1h-1zM467,341h1v1h-1zM614,310h1v1h-1zM320,599h1v1h-1zM572,330h1v1h-1zM169,354h1v1h-1zM227,484h1v1h-1zM255,500h1v1h-1zM456,443h1v1h-1zM390,556h1v1h-1zM255,372h1v1h-1zM376,437h1v1h-1zM133,438h1v1h-1zM505,394h1v1h-1zM359,443h1v1h-1zM557,399h1v1h-1zM248,598h1v1h-1zM161,490h1v1h-1zM234,313h1v1h-1zM574,331h1v1h-1zM614,329h1v1h-1zM134,610h1v1h-1zM529,369h1v1h-1zM530,580h1v1h-1zM561,604h1v1h-1zM334,583h1v1h-1zM221,341h1v1h-1zM203,330h1v1h-1zM176,544h1v1h-1zM419,577h1v1h-1zM662,344h1v1h-1zM387,370h1v1h-1zM522,465h1v1h-1zM372,541h1v1h-1zM413,462h1v1h-1zM109,474h1v1h-1z" fill="#fff" fill-opacity="0.9"/>
<path d="M636,548h1v1h-1zM617,499h1v1h-1zM497,419h1v1h-1zM329,447h1v1h-1zM430,536h1v1h-1zM318,497h1v1h-1zM198,418h1v1h-1zM469,400h1v1h-1zM543,492h1v1h-1zM638,546h1v1h-1zM512,424h1v1h-1zM309,415h1v1h-1zM610,423h1v1h-1zM622,494h1v1h-1zM460,384h1v1h-1zM256,491h1v1h-1zM382,524h1v1h-1zM613,508h1v1h-1zM656,610h1v1h-1zM329,522h1v1h-1zM353,549h1v1h-1zM280,487h1v1h-1zM673,580h1v1h-1zM365,593h1v1h-1zM429,455h1v1h-1zM218,430h1v1h-1zM373,488h1v1h-1zM474,596h1v1h-1zM636,447h1v1h-1zM606,541h1v1h-1zM196,588h1v1h-1zM227,556h1v1h-1zM221,466h1v1h-1zM206,406h1v1h-1zM399,596h1v1h-1zM291,392h1v1h-1zM664,478h1v1h-1zM284,542h1v1h-1zM450,565h1v1h-1zM374,405h1v1h-1zM526,599h1v1h-1zM445,605h1v1h-1zM206,459h1v1h-1zM173,454h1v1h-1zM453,485h1v1h-1zM526,396h1v1h-1zM175,457h1v1h-1zM178,426h1v1h-1zM148,404h1v1h-1zM626,484h1v1h-1zM214,498h1v1h-1zM534,398h1v1h-1zM339,487h1v1h-1zM135,524h1v1h-1zM662,454h1v1h-1zM218,554h1v1h-1zM631,462h1v1h-1zM478,399h1v1h-1zM585,477h1v1h-1zM213,423h1v1h-1z" fill="#000"/>
<path d="M225.9,387.5L224.7,400.8M244.6,383.9L242.1,397.8M368.1,322.5L365.1,334.5M280.7,377.9L279.2,392.3M292.0,378.0L290.5,391.6M350.0,375.5L347.6,388.7M360.2,375.5L357.8,388.7M439.4,324.9L437.4,337.5M580.0,351.4L575.2,362.2M201.2,407.4L200.6,421.3M238.5,432.7L237.9,446.0M252.4,446.6L251.2,460.4M253.6,462.8L253.6,476.1M197.6,473.7L197.0,487.5M339.2,423.1L337.3,436.9M360.2,423.1L359.0,435.1M383.7,424.3L381.9,435.7M254.8,446.0L253.6,459.2M350.0,453.8L348.8,467.7M331.9,454.4L330.1,467.7M307.2,456.8L306.0,470.1M284.9,459.2L283.7,472.5M254.8,461.6L253.6,476.1M312.7,473.1L312.0,486.3M337.3,471.3L336.1,484.5M342.8,488.1L341.6,501.4M360.2,489.3L359.0,501.4M369.3,488.1L368.1,501.4M384.9,488.1L383.7,500.2M464.1,444.2L460.5,456.8M399.6,454.4L397.2,467.7M438.2,457.4L435.2,470.1M436.4,473.1L434.0,486.3M443.0,473.1L440.6,486.3M483.4,478.5L481.0,491.7M523.1,469.5L521.3,482.1M509.9,482.7L507.5,495.4M435.2,489.3L432.8,502.6M614.9,447.2L610.7,459.2M602.3,473.7L598.7,486.9M577.0,497.8L573.3,510.0M368.0,505.0L366.0,517.6M375.8,523.3L374.5,536.0M332.2,542.9L330.9,556.8M366.3,561.3L365.0,575.8M426.5,524.0L425.2,537.2M446.1,525.2L444.2,539.1M484.7,566.3L482.1,580.9M544.2,506.3L541.1,518.3" stroke="#fff" stroke-width="5" stroke-opacity="0.28" fill="none"/>
<path d="M204.8,338.1L203.3,350.8M213.2,336.3L211.4,349.6M228.7,334.3L227.4,344.7M246.4,330.3L244.6,343.5M248.2,349.6L246.4,362.8M152.4,369.4L150.6,383.3M166.2,366.4L165.3,378.5M211.8,373.7L210.2,386.3M252.4,383.3L250.6,396.6M181.3,396.6L179.5,410.0M166.2,400.2L165.3,410.0M276.3,327.3L274.7,339.9M328.9,323.1L326.5,335.7M348.8,322.5L345.8,334.5M288.0,345.3L286.1,356.8M306.6,341.7L304.8,356.8M359.0,342.9L356.0,355.0M285.5,362.8L284.3,375.5M333.1,359.2L330.7,373.1M303.0,379.0L301.8,391.0M309.6,377.9L307.8,391.1M269.9,380.3L268.7,393.5M251.2,382.7L250.6,394.7M337.3,392.3L335.8,404.4M382.5,391.1L380.1,404.4M278.3,396.0L277.5,409.2M406.3,323.7L404.4,335.7M496.6,333.3L493.6,344.7M522.5,333.9L519.5,347.8M459.9,347.2L456.9,359.8M471.3,349.0L468.3,361.6M430.3,362.2L427.3,374.9M448.4,363.4L445.4,376.7M523.7,359.8L521.9,367.0M417.7,377.9L415.3,390.5M556.5,345.3L552.9,356.8M547.4,380.3L543.8,392.3M580.0,371.9L576.4,382.7M611.9,380.3L608.3,391.7M670.9,382.7L667.3,393.5M651.7,394.1L648.0,405.0M128.9,410.4L128.9,423.7M131.9,426.1L131.3,439.9M135.5,424.9L135.5,438.1M207.2,423.7L207.0,435.1M201.8,426.7L201.2,433.9M239.7,416.4L239.1,430.3M191.5,458.0L190.9,471.3M210.2,454.4L210.2,467.7M175.3,478.5L174.7,492.3M182.5,477.3L182.1,490.5M213.8,470.7L213.2,483.3M198.8,490.5L198.2,503.2M193.3,491.7L193.3,505.0M212.6,486.9L212.0,500.2M218.7,486.9L218.0,499.0M228.3,484.5L227.7,496.6M243.3,481.5L242.7,494.8M165.0,405.0L164.8,413.4M264.5,413.4L263.3,421.9M289.8,409.8L288.6,424.3M312.0,407.4L310.2,421.9M288.6,426.1L287.3,439.3M311.4,424.3L310.2,437.5M351.8,422.5L350.6,435.1M388.6,423.1L387.3,435.1M302.4,441.1L301.2,452.0M322.3,456.8L321.7,471.3M296.4,457.4L295.8,470.7M272.3,461.6L271.7,473.7M302.4,473.7L301.2,487.5M292.2,474.9L291.6,488.1M345.8,476.7L345.2,484.5M350.0,489.3L349.4,500.2M315.1,489.9L313.9,503.2M319.9,490.5L319.3,502.6M412.3,408.6L410.5,421.3M446.0,411.0L443.0,423.7M458.1,412.2L455.1,423.7M529.1,424.3L526.1,436.9M534.0,425.5L531.0,437.5M524.3,408.6L521.9,420.7M402.0,439.3L400.2,452.0M418.9,439.9L416.5,452.6M426.7,440.5L424.3,453.2M456.3,462.8L454.4,471.3M464.1,475.5L462.3,488.7M529.1,486.9L526.7,499.6M452.0,491.7L450.2,504.4M461.7,493.0L459.9,505.0M493.0,496.6L491.2,507.0M515.9,500.2L514.1,507.0M558.9,415.2L555.3,427.9M622.7,433.9L619.1,446.6M669.1,420.1L664.9,431.5M673.3,454.4L669.7,469.5M630.0,467.0L625.8,479.7M546.2,474.3L543.8,486.3M205.9,506.3L205.9,520.8M217.9,505.0L217.9,517.6M223.6,506.3L223.6,515.1M185.6,511.3L185.4,518.3M224.2,521.4L224.2,534.7M230.5,518.9L230.5,533.4M247.0,535.3L246.3,548.6M245.1,555.0L244.4,568.2M248.9,556.8L248.6,568.2M257.0,514.5L257.0,528.4M265.8,513.2L265.8,526.5M281.6,510.7L281.0,524.0M292.4,508.8L292.4,522.7M305.0,508.2L304.4,522.1M317.0,506.3L315.7,520.8M264.5,532.2L263.9,545.5M320.8,526.5L319.5,538.5M384.6,523.3L384.0,536.0M309.4,545.5L308.8,556.8M397.5,506.0L396.5,520.0M416.4,506.3L415.1,518.3M437.9,506.9L436.6,520.8M458.7,508.8L457.5,522.1M483.4,511.3L481.5,525.2M498.0,514.5L496.0,527.1M514.4,505.0L512.5,512.6M542.2,511.3L540.9,518.3M453.7,526.5L452.4,539.1M402.5,523.3L401.2,536.0M416.4,524.0L415.1,536.0M489.1,530.3L487.2,542.9M496.7,532.2L494.1,544.8M526.4,536.0L523.8,549.2M537.1,538.5L534.6,551.8M501.1,550.5L498.6,563.8M520.1,553.7L517.5,567.0M418.9,561.3L417.7,574.5M554.3,541.7L551.2,556.8" stroke="#fff" stroke-width="4" stroke-opacity="0.14" fill="none"/>
<path d="M204.8,338.1L203.3,350.8M213.2,336.3L211.4,349.6M228.7,334.3L227.4,344.7M246.4,330.3L244.6,343.5M152.4,369.4L150.6,383.3M243.8,383.9L241.3,397.8M245.4,383.9L242.9,397.8M181.3,396.6L179.5,410.0M276.3,327.3L274.7,339.9M328.9,323.1L326.5,335.7M348.8,322.5L345.8,334.5M306.6,341.7L304.8,356.8M349.2,375.5L346.8,388.7M350.8,375.5L348.4,388.7M337.3,392.3L335.8,404.4M382.5,391.1L380.1,404.4M406.3,323.7L404.4,335.7M522.5,333.9L519.5,347.8M459.9,347.2L456.9,359.8M471.3,349.0L468.3,361.6M430.3,362.2L427.3,374.9M547.4,380.3L543.8,392.3M611.9,380.3L608.3,391.7M128.9,410.4L128.9,423.7M131.9,426.1L131.3,439.9M135.5,424.9L135.5,438.1M200.4,407.4L199.8,421.3M202.0,407.4L201.4,421.3M207.2,423.7L207.0,435.1M239.7,416.4L239.1,430.3M237.7,432.7L237.1,446.0M239.3,432.7L238.7,446.0M252.8,462.8L252.8,476.1M254.4,462.8L254.4,476.1M191.5,458.0L190.9,471.3M196.8,473.7L196.2,487.5M198.4,473.7L197.8,487.5M175.3,478.5L174.7,492.3M198.8,490.5L198.2,503.2M243.3,481.5L242.7,494.8M264.5,413.4L263.3,421.9M347.6,453.8L346.4,467.7M349.2,453.8L348.0,467.7M350.8,453.8L349.6,467.7M352.4,453.8L351.2,467.7M331.1,454.4L329.3,467.7M332.7,454.4L330.9,467.7M306.4,456.8L305.2,470.1M308.0,456.8L306.8,470.1M253.2,461.6L252.0,476.1M254.8,461.6L253.6,476.1M256.4,461.6L255.2,476.1M311.9,473.1L311.2,486.3M313.5,473.1L312.8,486.3M302.4,473.7L301.2,487.5M336.5,471.3L335.3,484.5M338.1,471.3L336.9,484.5M342.0,488.1L340.8,501.4M343.6,488.1L342.4,501.4M358.6,489.3L357.4,501.4M360.2,489.3L359.0,501.4M361.8,489.3L360.6,501.4M367.7,488.1L366.5,501.4M369.3,488.1L368.1,501.4M370.9,488.1L369.7,501.4M383.3,488.1L382.1,500.2M384.9,488.1L383.7,500.2M386.5,488.1L385.3,500.2M315.1,489.9L313.9,503.2M412.3,408.6L410.5,421.3M446.0,411.0L443.0,423.7M458.1,412.2L455.1,423.7M529.1,424.3L526.1,436.9M534.0,425.5L531.0,437.5M402.0,439.3L400.2,452.0M418.9,439.9L416.5,452.6M463.3,444.2L459.7,456.8M464.9,444.2L461.3,456.8M398.8,454.4L396.4,467.7M400.4,454.4L398.0,467.7M437.4,457.4L434.4,470.1M439.0,457.4L436.0,470.1M434.8,473.1L432.4,486.3M436.4,473.1L434.0,486.3M438.0,473.1L435.6,486.3M442.2,473.1L439.8,486.3M443.8,473.1L441.4,486.3M464.1,475.5L462.3,488.7M482.6,478.5L480.2,491.7M484.2,478.5L481.8,491.7M522.3,469.5L520.5,482.1M523.9,469.5L522.1,482.1M509.1,482.7L506.7,495.4M510.7,482.7L508.3,495.4M529.1,486.9L526.7,499.6M452.0,491.7L450.2,504.4M558.9,415.2L555.3,427.9M622.7,433.9L619.1,446.6M614.1,447.2L609.9,459.2M615.7,447.2L611.5,459.2M669.1,420.1L664.9,431.5M601.5,473.7L597.9,486.9M603.1,473.7L599.5,486.9M546.2,474.3L543.8,486.3M576.2,497.8L572.5,510.0M577.8,497.8L574.1,510.0M205.9,506.3L205.9,520.8M217.9,505.0L217.9,517.6M264.5,532.2L263.9,545.5M331.4,542.9L330.1,556.8M333.0,542.9L331.7,556.8M364.7,561.3L363.4,575.8M366.3,561.3L365.0,575.8M367.9,561.3L366.6,575.8M483.4,511.3L481.5,525.2M498.0,514.5L496.0,527.1M425.7,524.0L424.4,537.2M427.3,524.0L426.0,537.2M445.3,525.2L443.4,539.1M446.9,525.2L445.0,539.1M496.7,532.2L494.1,544.8M526.4,536.0L523.8,549.2M537.1,538.5L534.6,551.8M501.1,550.5L498.6,563.8M520.1,553.7L517.5,567.0M483.9,566.3L481.3,580.9M485.5,566.3L482.9,580.9M543.4,506.3L540.3,518.3M545.0,506.3L541.9,518.3" stroke="#fff" stroke-width="1.2" stroke-opacity="1.00" stroke-dasharray="1.6 0.6" shape-rendering="crispEdges" fill="none"/>
<path d="M248.2,349.6L246.4,362.8M211.8,373.7L210.2,386.3M166.2,400.2L165.3,410.0M303.0,379.0L301.8,391.0M309.6,377.9L307.8,391.1M269.9,380.3L268.7,393.5M251.2,382.7L250.6,394.7M496.6,333.3L493.6,344.7M448.4,363.4L445.4,376.7M579.2,351.4L574.4,362.2M580.8,351.4L576.0,362.2M580.0,371.9L576.4,382.7M670.9,382.7L667.3,393.5M651.7,394.1L648.0,405.0M201.8,426.7L201.2,433.9M193.3,491.7L193.3,505.0M228.3,484.5L227.7,496.6M382.9,424.3L381.1,435.7M384.5,424.3L382.7,435.7M302.4,441.1L301.2,452.0M345.8,476.7L345.2,484.5M524.3,408.6L521.9,420.7M515.9,500.2L514.1,507.0M673.3,454.4L669.7,469.5M185.6,511.3L185.4,518.3M248.9,556.8L248.6,568.2M281.6,510.7L281.0,524.0M397.5,506.0L396.5,520.0M554.3,541.7L551.2,556.8" stroke="#fff" stroke-width="1.2" stroke-opacity="0.80" stroke-dasharray="1.6 0.6" shape-rendering="crispEdges" fill="none"/>
<path d="M166.2,366.4L165.3,378.5M252.4,383.3L250.6,396.6M367.3,322.5L364.3,334.5M368.9,322.5L365.9,334.5M288.0,345.3L286.1,356.8M359.0,342.9L356.0,355.0M285.5,362.8L284.3,375.5M333.1,359.2L330.7,373.1M279.9,377.9L278.4,392.3M281.5,377.9L280.0,392.3M291.2,378.0L289.7,391.6M292.8,378.0L291.3,391.6M359.4,375.5L357.0,388.7M361.0,375.5L358.6,388.7M278.3,396.0L277.5,409.2M437.0,324.9L435.0,337.5M438.6,324.9L436.6,337.5M440.2,324.9L438.2,337.5M441.8,324.9L439.8,337.5M523.7,359.8L521.9,367.0M417.7,377.9L415.3,390.5M556.5,345.3L552.9,356.8M251.6,446.6L250.4,460.4M253.2,446.6L252.0,460.4M210.2,454.4L210.2,467.7M182.5,477.3L182.1,490.5M213.8,470.7L213.2,483.3M212.6,486.9L212.0,500.2M218.7,486.9L218.0,499.0M165.0,405.0L164.8,413.4M289.8,409.8L288.6,424.3M312.0,407.4L310.2,421.9M288.6,426.1L287.3,439.3M311.4,424.3L310.2,437.5M338.4,423.1L336.5,436.9M340.0,423.1L338.1,436.9M351.8,422.5L350.6,435.1M359.4,423.1L358.2,435.1M361.0,423.1L359.8,435.1M388.6,423.1L387.3,435.1M254.0,446.0L252.8,459.2M255.6,446.0L254.4,459.2M322.3,456.8L321.7,471.3M296.4,457.4L295.8,470.7M284.1,459.2L282.9,472.5M285.7,459.2L284.5,472.5M272.3,461.6L271.7,473.7M292.2,474.9L291.6,488.1M350.0,489.3L349.4,500.2M319.9,490.5L319.3,502.6M426.7,440.5L424.3,453.2M456.3,462.8L454.4,471.3M461.7,493.0L459.9,505.0M493.0,496.6L491.2,507.0M630.0,467.0L625.8,479.7M223.6,506.3L223.6,515.1M224.2,521.4L224.2,534.7M230.5,518.9L230.5,533.4M247.0,535.3L246.3,548.6M245.1,555.0L244.4,568.2M257.0,514.5L257.0,528.4M265.8,513.2L265.8,526.5M292.4,508.8L292.4,522.7M305.0,508.2L304.4,522.1M317.0,506.3L315.7,520.8M320.8,526.5L319.5,538.5M375.0,523.3L373.7,536.0M376.6,523.3L375.3,536.0M384.6,523.3L384.0,536.0M309.4,545.5L308.8,556.8M416.4,506.3L415.1,518.3M437.9,506.9L436.6,520.8M458.7,508.8L457.5,522.1M514.4,505.0L512.5,512.6M542.2,511.3L540.9,518.3M453.7,526.5L452.4,539.1M402.5,523.3L401.2,536.0M416.4,524.0L415.1,536.0M489.1,530.3L487.2,542.9M418.9,561.3L417.7,574.5" stroke="#fff" stroke-width="1.2" stroke-opacity="0.90" stroke-dasharray="1.6 0.6" shape-rendering="crispEdges" fill="none"/>
<path d="M225.1,387.5L223.9,400.8M226.7,387.5L225.5,400.8M479.1,330.3L476.7,340.5M591.4,377.3L588.4,386.3M295.2,426.7L294.6,435.7M262.7,496.6L262.0,505.0M446.0,427.9L444.2,440.0M485.8,447.2L484.0,459.2M604.7,429.1L601.1,440.5M598.7,488.1L595.0,501.4M576.4,465.2L572.7,477.3M216.0,541.7L215.4,555.6M467.6,546.7L465.7,559.4M399.3,561.3L398.1,574.5M452.4,565.0L451.2,576.4M548.0,524.0L545.5,536.6" stroke="#fff" stroke-width="1.2" stroke-opacity="0.60" stroke-dasharray="1.6 0.6" shape-rendering="crispEdges" fill="none"/>
<path d="M247.0,400.2L246.4,410.0M458.7,365.8L456.3,376.7M445.4,441.1L443.0,454.4M434.4,489.3L432.0,502.6M436.0,489.3L433.6,502.6M361.3,542.3L360.0,554.9" stroke="#fff" stroke-width="1.2" stroke-opacity="0.70" stroke-dasharray="1.6 0.6" shape-rendering="crispEdges" fill="none"/>
<path d="M351.8,359.8L350.6,371.3M340.4,379.0L339.2,386.3M365.7,392.3L364.5,403.2M533.4,377.3L530.3,385.1M558.3,383.3L555.3,391.1M586.6,392.3L583.6,403.2M275.3,429.1L274.1,441.1M592.6,452.0L589.0,467.7M219.0,541.7L218.4,554.6M239.0,538.0L239.0,549.0M364.0,505.0L362.0,517.6M365.6,505.0L363.6,517.6M367.2,505.0L365.2,517.6M368.8,505.0L366.8,517.6M370.4,505.0L368.4,517.6M372.0,505.0L370.0,517.6" stroke="#fff" stroke-width="1.2" stroke-opacity="0.50" stroke-dasharray="1.6 0.6" shape-rendering="crispEdges" fill="none"/>
</g></g>
<line x1="391.5" y1="304.9" x2="391.5" y2="617.4" stroke="#0000ff" stroke-width="1.2"/>
<line x1="100.3" y1="461.5" x2="682.9" y2="461.5" stroke="#0000ff" stroke-width="1.2"/>
<rect x="106.0" y="308.0" width="570.0" height="306.0" fill="none" stroke="#000" stroke-width="1.8"/>
<line x1="99.2" y1="614.00" x2="106" y2="614.00" stroke="#000" stroke-width="1.8"/>
<text transform="translate(83.76,617.70) scale(1.0800,1)" font-size="10.45" fill="#000">0</text>
<line x1="99.2" y1="558.44" x2="106" y2="558.44" stroke="#000" stroke-width="1.8"/>
<text transform="translate(71.20,562.14) scale(1.0800,1)" font-size="10.45" fill="#000">200</text>
<line x1="99.2" y1="502.88" x2="106" y2="502.88" stroke="#000" stroke-width="1.8"/>
<text transform="translate(71.20,506.58) scale(1.0800,1)" font-size="10.45" fill="#000">400</text>
<line x1="99.2" y1="447.32" x2="106" y2="447.32" stroke="#000" stroke-width="1.8"/>
<text transform="translate(71.20,451.02) scale(1.0800,1)" font-size="10.45" fill="#000">600</text>
<line x1="99.2" y1="391.76" x2="106" y2="391.76" stroke="#000" stroke-width="1.8"/>
<text transform="translate(71.20,395.46) scale(1.0800,1)" font-size="10.45" fill="#000">800</text>
<line x1="99.2" y1="336.20" x2="106" y2="336.20" stroke="#000" stroke-width="1.8"/>
<text transform="translate(64.94,339.90) scale(1.0800,1)" font-size="10.45" fill="#000">1000</text>
<line x1="106.00" y1="614" x2="106.00" y2="620.7" stroke="#000" stroke-width="1.8"/>
<text transform="translate(102.85,636.90) scale(1.0800,1)" font-size="10.45" fill="#000">0</text>
<line x1="175.70" y1="614" x2="175.70" y2="620.7" stroke="#000" stroke-width="1.8"/>
<text transform="translate(166.22,636.90) scale(1.0800,1)" font-size="10.45" fill="#000">250</text>
<line x1="245.40" y1="614" x2="245.40" y2="620.7" stroke="#000" stroke-width="1.8"/>
<text transform="translate(235.98,636.90) scale(1.0800,1)" font-size="10.45" fill="#000">500</text>
<line x1="315.10" y1="614" x2="315.10" y2="620.7" stroke="#000" stroke-width="1.8"/>
<text transform="translate(305.61,636.90) scale(1.0800,1)" font-size="10.45" fill="#000">750</text>
<line x1="384.80" y1="614" x2="384.80" y2="620.7" stroke="#000" stroke-width="1.8"/>
<text transform="translate(372.05,636.90) scale(1.0800,1)" font-size="10.45" fill="#000">1000</text>
<line x1="454.50" y1="614" x2="454.50" y2="620.7" stroke="#000" stroke-width="1.8"/>
<text transform="translate(441.75,636.90) scale(1.0800,1)" font-size="10.45" fill="#000">1250</text>
<line x1="524.20" y1="614" x2="524.20" y2="620.7" stroke="#000" stroke-width="1.8"/>
<text transform="translate(511.45,636.90) scale(1.0800,1)" font-size="10.45" fill="#000">1500</text>
<line x1="593.90" y1="614" x2="593.90" y2="620.7" stroke="#000" stroke-width="1.8"/>
<text transform="translate(581.15,636.90) scale(1.0800,1)" font-size="10.45" fill="#000">1750</text>
<line x1="663.60" y1="614" x2="663.60" y2="620.7" stroke="#000" stroke-width="1.8"/>
<text transform="translate(650.99,636.90) scale(1.0800,1)" font-size="10.45" fill="#000">2000</text>
<text transform="translate(388.21,654.80) scale(1.0000,1)" font-size="10.45" fill="#000">X</text>
<text transform="translate(53.80,460.60) rotate(-90) translate(-3.49,0) scale(1.0000,1)" font-size="10.45" fill="#000">Y</text>
<rect x="712.0" y="113.0" width="35.0" height="696.0" fill="url(#gcb)" stroke="#000" stroke-width="1.8"/>
<line x1="747" y1="767.00" x2="753.5" y2="767.00" stroke="#000" stroke-width="1.8"/>
<text transform="translate(762.04,770.80) scale(1.0800,1)" font-size="10.45" fill="#000">60</text>
<line x1="747" y1="682.99" x2="753.5" y2="682.99" stroke="#000" stroke-width="1.8"/>
<text transform="translate(762.12,686.79) scale(1.0800,1)" font-size="10.45" fill="#000">80</text>
<line x1="747" y1="598.98" x2="753.5" y2="598.98" stroke="#000" stroke-width="1.8"/>
<text transform="translate(761.75,602.78) scale(1.0800,1)" font-size="10.45" fill="#000">100</text>
<line x1="747" y1="514.97" x2="753.5" y2="514.97" stroke="#000" stroke-width="1.8"/>
<text transform="translate(761.75,518.77) scale(1.0800,1)" font-size="10.45" fill="#000">120</text>
<line x1="747" y1="430.97" x2="753.5" y2="430.97" stroke="#000" stroke-width="1.8"/>
<text transform="translate(761.75,434.77) scale(1.0800,1)" font-size="10.45" fill="#000">140</text>
<line x1="747" y1="346.96" x2="753.5" y2="346.96" stroke="#000" stroke-width="1.8"/>
<text transform="translate(761.75,350.76) scale(1.0800,1)" font-size="10.45" fill="#000">160</text>
<line x1="747" y1="262.95" x2="753.5" y2="262.95" stroke="#000" stroke-width="1.8"/>
<text transform="translate(761.75,266.75) scale(1.0800,1)" font-size="10.45" fill="#000">180</text>
<line x1="747" y1="178.95" x2="753.5" y2="178.95" stroke="#000" stroke-width="1.8"/>
<text transform="translate(762.04,182.75) scale(1.0800,1)" font-size="10.45" fill="#000">200</text>
<g clip-path="url(#chd)"><polyline fill="none" stroke="#0000ff" stroke-width="1.5" points="911.00,232.60 985.90,232.60 985.90,226.90 991.53,226.90 991.53,232.60 997.16,232.60 997.16,222.90 1002.79,222.90 1002.79,206.90 1008.42,206.90 1008.42,146.80 1014.05,146.80 1014.05,184.70 1019.68,184.70 1019.68,161.90 1025.31,161.90 1025.31,155.90 1030.94,155.90 1030.94,121.70 1036.57,121.70 1036.57,119.30 1042.20,119.30 1042.20,120.80 1047.83,120.80 1047.83,121.70 1053.46,121.70 1053.46,121.70 1059.09,121.70 1059.09,124.50 1064.72,124.50 1064.72,125.70 1070.35,125.70 1070.35,135.90 1075.98,135.90 1075.98,158.90 1081.61,158.90 1081.61,161.90 1087.24,161.90 1087.24,163.80 1092.87,163.80 1092.87,165.80 1098.50,165.80 1098.50,167.50 1104.13,167.50 1104.13,169.80 1109.76,169.80 1109.76,171.60 1115.39,171.60 1115.39,171.60 1121.02,171.60 1121.02,172.80 1126.65,172.80 1126.65,173.80 1132.28,173.80 1132.28,175.80 1137.91,175.80 1137.91,176.80 1143.54,176.80 1143.54,176.80 1149.17,176.80 1149.17,177.70 1154.80,177.70 1154.80,177.70 1160.43,177.70 1160.43,178.80 1166.06,178.80 1166.06,178.80 1171.69,178.80 1171.69,178.80 1177.32,178.80 1177.32,179.50 1182.95,179.50 1182.95,147.80 1185.00,147.80"/></g>
<defs><clipPath id="chd"><rect x="911" y="113" width="274" height="120.5"/></clipPath></defs>
<rect x="911.0" y="113.0" width="274.0" height="120.0" fill="none" stroke="#000" stroke-width="1.8"/>
<line x1="904.2" y1="232.60" x2="911" y2="232.60" stroke="#000" stroke-width="1.8"/>
<text transform="translate(890.30,236.20) scale(1.0800,1)" font-size="10.20" fill="#000">0</text>
<line x1="904.2" y1="192.20" x2="911" y2="192.20" stroke="#000" stroke-width="1.8"/>
<text transform="translate(890.44,195.80) scale(1.0800,1)" font-size="10.20" fill="#000">2</text>
<line x1="904.2" y1="151.70" x2="911" y2="151.70" stroke="#000" stroke-width="1.8"/>
<text transform="translate(890.19,155.30) scale(1.0800,1)" font-size="10.20" fill="#000">4</text>
<line x1="956.60" y1="233.00" x2="956.60" y2="239.70" stroke="#000" stroke-width="1.8"/>
<text transform="translate(945.13,255.70) scale(1.1200,1)" font-size="10.20" fill="#000">-200</text>
<line x1="1012.90" y1="233.00" x2="1012.90" y2="239.70" stroke="#000" stroke-width="1.8"/>
<line x1="1069.20" y1="233.00" x2="1069.20" y2="239.70" stroke="#000" stroke-width="1.8"/>
<text transform="translate(1059.95,255.70) scale(1.0800,1)" font-size="10.20" fill="#000">200</text>
<line x1="1125.50" y1="233.00" x2="1125.50" y2="239.70" stroke="#000" stroke-width="1.8"/>
<line x1="1181.80" y1="233.00" x2="1181.80" y2="239.70" stroke="#000" stroke-width="1.8"/>
<text transform="translate(1172.55,255.70) scale(1.0800,1)" font-size="10.20" fill="#000">600</text>
<text transform="translate(1031.12,274.00) scale(1.1102,1)" font-size="10.20" fill="#000">counts</text>
<text transform="translate(880.10,172.65) rotate(-90) translate(-36.36,0) scale(1.1745,1)" font-size="10.20" fill="#000">log frequency</text>
<text transform="translate(1192.40,174.95) rotate(90) translate(-48.02,0) scale(1.2177,1)" font-size="10.20" fill="#000">histogram (detail)</text>
<polyline fill="none" stroke="#0000ff" stroke-width="1.5" points="913.20,404.40 924.60,404.40 924.60,290.80 930.22,290.80 930.22,337.80 935.84,337.80 935.84,344.70 941.46,344.70 941.46,348.80 947.08,348.80 947.08,353.70 952.70,353.70 952.70,357.70 958.32,357.70 958.32,361.80 963.94,361.80 963.94,364.00 969.56,364.00 969.56,365.90 975.18,365.90 975.18,367.90 980.80,367.90 980.80,368.90 986.42,368.90 986.42,369.70 992.04,369.70 992.04,369.70 997.66,369.70 997.66,375.70 1003.28,375.70 1003.28,388.80 1008.90,388.80 1008.90,387.60 1014.52,387.60 1014.52,396.60 1020.14,396.60 1020.14,393.90 1025.76,393.90 1025.76,404.40 1031.38,404.40 1031.38,394.20 1037.00,394.20 1037.00,404.40 1042.62,404.40 1042.62,391.10 1048.24,391.10 1048.24,400.00 1053.86,400.00 1053.86,404.40 1059.48,404.40 1059.48,404.40 1065.10,404.40 1065.10,404.40 1070.72,404.40 1070.72,400.00 1076.34,400.00 1076.34,404.40 1185.00,404.40"/>
<rect x="911.0" y="285.0" width="274.0" height="119.5" fill="none" stroke="#000" stroke-width="1.8"/>
<line x1="904.2" y1="404.40" x2="911" y2="404.40" stroke="#000" stroke-width="1.8"/>
<text transform="translate(890.30,408.00) scale(1.0800,1)" font-size="10.20" fill="#000">0</text>
<line x1="904.2" y1="369.40" x2="911" y2="369.40" stroke="#000" stroke-width="1.8"/>
<text transform="translate(890.44,373.00) scale(1.0800,1)" font-size="10.20" fill="#000">2</text>
<line x1="904.2" y1="333.10" x2="911" y2="333.10" stroke="#000" stroke-width="1.8"/>
<text transform="translate(890.19,336.70) scale(1.0800,1)" font-size="10.20" fill="#000">4</text>
<line x1="904.2" y1="296.90" x2="911" y2="296.90" stroke="#000" stroke-width="1.8"/>
<text transform="translate(890.35,300.50) scale(1.0800,1)" font-size="10.20" fill="#000">6</text>
<line x1="928.90" y1="404.50" x2="928.90" y2="411.20" stroke="#000" stroke-width="1.8"/>
<text transform="translate(925.83,428.20) scale(1.0800,1)" font-size="10.20" fill="#000">0</text>
<line x1="966.30" y1="404.50" x2="966.30" y2="411.20" stroke="#000" stroke-width="1.8"/>
<line x1="1003.70" y1="404.50" x2="1003.70" y2="411.20" stroke="#000" stroke-width="1.8"/>
<text transform="translate(988.32,428.20) scale(1.0800,1)" font-size="10.20" fill="#000">20000</text>
<line x1="1041.10" y1="404.50" x2="1041.10" y2="411.20" stroke="#000" stroke-width="1.8"/>
<line x1="1078.50" y1="404.50" x2="1078.50" y2="411.20" stroke="#000" stroke-width="1.8"/>
<text transform="translate(1063.27,428.20) scale(1.0800,1)" font-size="10.20" fill="#000">40000</text>
<line x1="1115.90" y1="404.50" x2="1115.90" y2="411.20" stroke="#000" stroke-width="1.8"/>
<line x1="1153.30" y1="404.50" x2="1153.30" y2="411.20" stroke="#000" stroke-width="1.8"/>
<text transform="translate(1137.92,428.20) scale(1.0800,1)" font-size="10.20" fill="#000">60000</text>
<text transform="translate(1031.12,446.00) scale(1.1102,1)" font-size="10.20" fill="#000">counts</text>
<text transform="translate(880.10,345.70) rotate(-90) translate(-37.13,0) scale(1.1993,1)" font-size="10.20" fill="#000">log frequency</text>
<text transform="translate(1192.40,349.60) rotate(90) translate(-41.07,0) scale(1.2164,1)" font-size="10.20" fill="#000">histogram (full)</text>
<rect x="911.0" y="517.0" width="274.0" height="120.0" fill="none" stroke="#000" stroke-width="1.8"/>
<line x1="904.2" y1="517.40" x2="911" y2="517.40" stroke="#000" stroke-width="1.8"/>
<text transform="translate(877.24,521.00) scale(1.0800,1)" font-size="10.20" fill="#000">600</text>
<line x1="904.2" y1="542.30" x2="911" y2="542.30" stroke="#000" stroke-width="1.8"/>
<text transform="translate(877.24,545.90) scale(1.0800,1)" font-size="10.20" fill="#000">400</text>
<line x1="904.2" y1="567.20" x2="911" y2="567.20" stroke="#000" stroke-width="1.8"/>
<text transform="translate(877.24,570.80) scale(1.0800,1)" font-size="10.20" fill="#000">200</text>
<line x1="904.2" y1="592.10" x2="911" y2="592.10" stroke="#000" stroke-width="1.8"/>
<text transform="translate(889.50,595.70) scale(1.0800,1)" font-size="10.20" fill="#000">0</text>
<line x1="904.2" y1="617.00" x2="911" y2="617.00" stroke="#000" stroke-width="1.8"/>
<text transform="translate(868.99,620.60) scale(1.1600,1)" font-size="10.20" fill="#000">−200</text>
<line x1="911.90" y1="637.00" x2="911.90" y2="643.70" stroke="#000" stroke-width="1.8"/>
<text transform="translate(908.83,659.60) scale(1.0800,1)" font-size="10.20" fill="#000">0</text>
<line x1="978.30" y1="637.00" x2="978.30" y2="643.70" stroke="#000" stroke-width="1.8"/>
<text transform="translate(969.10,659.60) scale(1.0800,1)" font-size="10.20" fill="#000">500</text>
<line x1="1044.70" y1="637.00" x2="1044.70" y2="643.70" stroke="#000" stroke-width="1.8"/>
<text transform="translate(1032.25,659.60) scale(1.0800,1)" font-size="10.20" fill="#000">1000</text>
<line x1="1111.10" y1="637.00" x2="1111.10" y2="643.70" stroke="#000" stroke-width="1.8"/>
<text transform="translate(1098.65,659.60) scale(1.0800,1)" font-size="10.20" fill="#000">1500</text>
<line x1="1177.50" y1="637.00" x2="1177.50" y2="643.70" stroke="#000" stroke-width="1.8"/>
<text transform="translate(1165.19,659.60) scale(1.0800,1)" font-size="10.20" fill="#000">2000</text>
<text transform="translate(1043.50,678.20) scale(1.0000,1)" font-size="10.20" fill="#000">X</text>
<text transform="translate(857.30,578.35) rotate(-90) translate(-17.14,0) scale(1.1375,1)" font-size="10.20" fill="#000">counts</text>
<text transform="translate(1193.30,575.00) rotate(90) translate(-20.55,0) scale(1.2599,1)" font-size="10.20" fill="#000">cut in x</text>
<rect x="911.0" y="689.0" width="274.0" height="120.0" fill="none" stroke="#000" stroke-width="1.8"/>
<line x1="904.2" y1="690.00" x2="911" y2="690.00" stroke="#000" stroke-width="1.8"/>
<text transform="translate(877.24,693.60) scale(1.0800,1)" font-size="10.20" fill="#000">600</text>
<line x1="904.2" y1="714.80" x2="911" y2="714.80" stroke="#000" stroke-width="1.8"/>
<text transform="translate(877.24,718.40) scale(1.0800,1)" font-size="10.20" fill="#000">400</text>
<line x1="904.2" y1="739.60" x2="911" y2="739.60" stroke="#000" stroke-width="1.8"/>
<text transform="translate(877.24,743.20) scale(1.0800,1)" font-size="10.20" fill="#000">200</text>
<line x1="904.2" y1="764.40" x2="911" y2="764.40" stroke="#000" stroke-width="1.8"/>
<text transform="translate(889.50,768.00) scale(1.0800,1)" font-size="10.20" fill="#000">0</text>
<line x1="904.2" y1="789.20" x2="911" y2="789.20" stroke="#000" stroke-width="1.8"/>
<text transform="translate(868.99,792.80) scale(1.1600,1)" font-size="10.20" fill="#000">−200</text>
<line x1="913.20" y1="809.00" x2="913.20" y2="815.70" stroke="#000" stroke-width="1.8"/>
<text transform="translate(910.13,832.30) scale(1.0800,1)" font-size="10.20" fill="#000">0</text>
<line x1="962.12" y1="809.00" x2="962.12" y2="815.70" stroke="#000" stroke-width="1.8"/>
<text transform="translate(952.87,832.30) scale(1.0800,1)" font-size="10.20" fill="#000">200</text>
<line x1="1011.04" y1="809.00" x2="1011.04" y2="815.70" stroke="#000" stroke-width="1.8"/>
<text transform="translate(1001.94,832.30) scale(1.0800,1)" font-size="10.20" fill="#000">400</text>
<line x1="1059.96" y1="809.00" x2="1059.96" y2="815.70" stroke="#000" stroke-width="1.8"/>
<text transform="translate(1050.71,832.30) scale(1.0800,1)" font-size="10.20" fill="#000">600</text>
<line x1="1108.88" y1="809.00" x2="1108.88" y2="815.70" stroke="#000" stroke-width="1.8"/>
<text transform="translate(1099.67,832.30) scale(1.0800,1)" font-size="10.20" fill="#000">800</text>
<line x1="1157.80" y1="809.00" x2="1157.80" y2="815.70" stroke="#000" stroke-width="1.8"/>
<text transform="translate(1145.35,832.30) scale(1.0800,1)" font-size="10.20" fill="#000">1000</text>
<text transform="translate(1045.60,849.80) scale(1.0000,1)" font-size="10.20" fill="#000">Y</text>
<text transform="translate(857.30,750.80) rotate(-90) translate(-18.02,0) scale(1.1956,1)" font-size="10.20" fill="#000">counts</text>
<text transform="translate(1193.00,749.15) rotate(90) translate(-19.67,0) scale(1.2025,1)" font-size="10.20" fill="#000">cut in y</text>
<defs><clipPath id="ccx"><rect x="911" y="517" width="274" height="120"/></clipPath><clipPath id="ccy"><rect x="911" y="689" width="274" height="120"/></clipPath></defs>
<g clip-path="url(#ccx)"><polyline fill="none" stroke="#0000ff" stroke-width="1.7" stroke-linejoin="miter" points="912.20,592.10 912.20,575.75 912.60,575.51 913.00,576.21 913.40,575.40 913.80,576.05 914.20,575.81 914.60,575.38 915.00,576.01 915.40,575.35 915.80,575.91 916.20,575.40 916.60,575.43 917.00,575.89 917.40,576.46 917.80,575.47 918.20,575.61 918.60,576.18 919.00,576.63 919.40,576.11 919.80,575.86 920.20,576.67 920.60,575.37 921.00,576.50 921.40,575.71 921.80,575.50 922.20,575.46 922.60,575.73 923.00,576.44 923.40,575.55 923.80,576.11 924.20,576.19 924.60,573.00 925.00,573.00 925.40,573.00 925.80,575.38 926.20,575.59 926.60,576.25 927.00,575.90 927.40,575.74 927.80,576.12 928.20,575.93 928.60,575.72 929.00,576.41 929.40,576.28 929.80,575.64 930.20,576.10 930.60,566.30 931.00,566.30 931.40,576.32 931.80,575.70 932.20,576.67 932.60,575.47 933.00,575.89 933.40,576.36 933.80,575.51 934.20,575.98 934.60,575.35 935.00,576.24 935.40,576.37 935.80,576.10 936.20,576.53 936.60,573.50 937.00,573.50 937.40,573.50 937.80,576.11 938.20,575.94 938.60,576.48 939.00,576.62 939.40,575.96 939.80,576.23 940.20,575.38 940.60,576.28 941.00,576.21 941.40,576.69 941.80,576.45 942.20,575.70 942.60,570.30 943.00,570.30 943.40,575.33 943.80,575.95 944.20,575.54 944.60,575.46 945.00,575.38 945.40,576.38 945.80,575.48 946.20,575.65 946.60,575.85 947.00,576.52 947.40,575.41 947.80,573.00 948.20,573.00 948.60,576.54 949.00,576.45 949.40,576.51 949.80,575.69 950.20,575.88 950.60,575.80 951.00,576.54 951.40,576.64 951.80,510.00 952.20,510.00 952.60,510.00 953.00,575.63 953.40,575.98 953.80,576.12 954.20,575.67 954.60,575.31 955.00,575.89 955.40,575.82 955.80,576.09 956.20,576.63 956.60,576.27 957.00,576.02 957.40,576.16 957.80,576.25 958.20,575.38 958.60,576.56 959.00,576.39 959.40,576.52 959.80,576.42 960.20,575.85 960.60,575.86 961.00,510.00 961.40,510.00 961.80,510.00 962.20,575.39 962.60,575.59 963.00,575.53 963.40,575.78 963.80,575.37 964.20,575.30 964.60,575.51 965.00,575.44 965.40,575.81 965.80,575.34 966.20,576.52 966.60,576.16 967.00,575.51 967.40,575.65 967.80,575.79 968.20,575.81 968.60,573.60 969.00,573.60 969.40,573.60 969.80,575.95 970.20,575.98 970.60,575.42 971.00,575.44 971.40,575.78 971.80,575.67 972.20,576.46 972.60,575.53 973.00,575.33 973.40,576.63 973.80,576.04 974.20,575.51 974.60,576.06 975.00,575.34 975.40,576.04 975.80,576.67 976.20,576.51 976.60,576.27 977.00,575.67 977.40,575.81 977.80,575.53 978.20,576.38 978.60,576.05 979.00,576.39 979.40,567.90 979.80,567.90 980.20,576.44 980.60,576.68 981.00,576.49 981.40,576.43 981.80,576.45 982.20,576.34 982.60,575.62 983.00,576.02 983.40,575.80 983.80,575.34 984.20,575.34 984.60,572.80 985.00,572.80 985.40,572.80 985.80,576.60 986.20,575.89 986.60,576.57 987.00,576.63 987.40,576.58 987.80,575.75 988.20,575.54 988.60,575.54 989.00,575.49 989.40,575.50 989.80,576.08 990.20,576.45 990.60,510.00 991.00,510.00 991.40,510.00 991.80,576.27 992.20,575.26 992.60,576.05 993.00,576.38 993.40,576.19 993.80,576.13 994.20,575.73 994.60,575.29 995.00,576.13 995.40,575.47 995.80,576.11 996.20,510.00 996.60,510.00 997.00,510.00 997.40,576.22 997.80,575.89 998.20,575.08 998.60,575.00 999.00,575.00 999.40,576.03 999.80,575.87 1000.20,574.91 1000.60,575.84 1001.00,576.03 1001.40,575.54 1001.80,575.08 1002.20,510.00 1002.60,510.00 1003.00,510.00 1003.40,575.84 1003.80,575.36 1004.20,575.16 1004.60,575.70 1005.00,574.97 1005.40,575.56 1005.80,575.47 1006.20,574.58 1006.60,574.62 1007.00,510.00 1007.40,510.00 1007.80,510.00 1008.20,574.55 1008.60,574.76 1009.00,574.34 1009.40,575.41 1009.80,574.62 1010.20,567.10 1010.60,567.10 1011.00,575.37 1011.40,574.69 1011.80,575.39 1012.20,574.80 1012.60,574.85 1013.00,574.84 1013.40,574.14 1013.80,574.74 1014.20,574.39 1014.60,510.00 1015.00,510.00 1015.40,510.00 1015.80,574.85 1016.20,575.22 1016.60,575.00 1017.00,574.70 1017.40,559.10 1017.80,559.10 1018.20,559.10 1018.60,510.00 1019.00,510.00 1019.40,510.00 1019.80,574.81 1020.20,575.53 1020.60,575.19 1021.00,575.29 1021.40,575.60 1021.80,575.84 1022.20,575.21 1022.60,575.48 1023.00,575.36 1023.40,575.40 1023.80,575.68 1024.20,575.37 1024.60,575.51 1025.00,575.46 1025.40,576.14 1025.80,575.82 1026.20,576.10 1026.60,576.21 1027.00,575.28 1027.40,510.00 1027.80,510.00 1028.20,592.10 1028.60,575.20 1029.00,575.20 1029.40,575.66 1029.80,575.16 1030.20,575.42 1030.60,575.20 1031.00,576.05 1031.40,571.00 1031.80,571.00 1032.20,575.37 1032.60,576.16 1033.00,569.50 1033.40,569.50 1033.80,569.50 1034.20,576.56 1034.60,575.52 1035.00,576.55 1035.40,575.86 1035.80,575.98 1036.20,576.69 1036.60,576.47 1037.00,575.53 1037.40,575.90 1037.80,576.02 1038.20,575.77 1038.60,575.57 1039.00,575.75 1039.40,576.31 1039.80,575.33 1040.20,576.08 1040.60,575.92 1041.00,575.33 1041.40,575.76 1041.80,576.17 1042.20,576.02 1042.60,575.39 1043.00,576.68 1043.40,576.40 1043.80,576.66 1044.20,575.45 1044.60,569.20 1045.00,569.20 1045.40,576.39 1045.80,575.68 1046.20,575.48 1046.60,575.89 1047.00,576.58 1047.40,576.45 1047.80,575.66 1048.20,575.51 1048.60,576.59 1049.00,576.10 1049.40,576.28 1049.80,575.43 1050.20,575.38 1050.60,561.80 1051.00,561.80 1051.40,561.80 1051.80,576.61 1052.20,576.19 1052.60,576.42 1053.00,575.42 1053.40,576.50 1053.80,575.39 1054.20,576.51 1054.60,575.94 1055.00,575.77 1055.40,576.07 1055.80,576.60 1056.20,575.68 1056.60,575.48 1057.00,576.04 1057.40,575.63 1057.80,575.45 1058.20,575.53 1058.60,575.37 1059.00,575.58 1059.40,562.30 1059.80,562.30 1060.20,562.30 1060.60,575.71 1061.00,576.00 1061.40,575.55 1061.80,575.79 1062.20,575.33 1062.60,575.65 1063.00,575.32 1063.40,576.33 1063.80,576.07 1064.20,575.57 1064.60,575.96 1065.00,576.61 1065.40,575.45 1065.80,576.45 1066.20,575.91 1066.60,575.99 1067.00,576.47 1067.40,575.85 1067.80,576.01 1068.20,576.26 1068.60,510.00 1069.00,510.00 1069.40,510.00 1069.80,510.00 1070.20,510.00 1070.60,575.87 1071.00,575.79 1071.40,575.38 1071.80,575.48 1072.20,575.40 1072.60,576.34 1073.00,575.66 1073.40,575.53 1073.80,575.42 1074.20,576.48 1074.60,576.52 1075.00,576.24 1075.40,575.69 1075.80,575.64 1076.20,575.71 1076.60,575.94 1077.00,575.52 1077.40,575.92 1077.80,575.67 1078.20,532.50 1078.60,532.50 1079.00,532.50 1079.40,575.64 1079.80,576.65 1080.20,575.73 1080.60,575.80 1081.00,575.30 1081.40,575.83 1081.80,575.96 1082.20,576.00 1082.60,575.58 1083.00,576.01 1083.40,575.31 1083.80,575.67 1084.20,575.43 1084.60,575.86 1085.00,575.36 1085.40,575.33 1085.80,575.73 1086.20,575.63 1086.60,576.12 1087.00,576.04 1087.40,576.35 1087.80,572.50 1088.20,572.50 1088.60,576.53 1089.00,575.85 1089.40,575.76 1089.80,576.68 1090.20,575.51 1090.60,576.31 1091.00,570.30 1091.40,570.30 1091.80,570.30 1092.20,576.55 1092.60,576.18 1093.00,576.33 1093.40,576.44 1093.80,575.50 1094.20,576.03 1094.60,576.01 1095.00,576.47 1095.40,576.43 1095.80,576.46 1096.20,576.12 1096.60,576.55 1097.00,576.26 1097.40,576.27 1097.80,575.62 1098.20,575.34 1098.60,575.49 1099.00,575.80 1099.40,575.45 1099.80,573.00 1100.20,573.00 1100.60,576.18 1101.00,576.18 1101.40,576.25 1101.80,575.99 1102.20,575.30 1102.60,576.42 1103.00,576.35 1103.40,576.00 1103.80,576.05 1104.20,576.22 1104.60,575.39 1105.00,576.33 1105.40,575.65 1105.80,575.40 1106.20,575.67 1106.60,576.32 1107.00,575.59 1107.40,576.34 1107.80,576.67 1108.20,575.99 1108.60,575.84 1109.00,575.97 1109.40,576.26 1109.80,576.37 1110.20,576.16 1110.60,570.00 1111.00,570.00 1111.40,575.51 1111.80,575.66 1112.20,576.34 1112.60,575.73 1113.00,576.09 1113.40,575.32 1113.80,575.38 1114.20,575.68 1114.60,576.24 1115.00,576.27 1115.40,576.25 1115.80,575.71 1116.20,576.02 1116.60,575.95 1117.00,575.95 1117.40,575.47 1117.80,576.55 1118.20,575.58 1118.60,576.67 1119.00,576.61 1119.40,575.32 1119.80,575.94 1120.20,576.45 1120.60,576.66 1121.00,575.93 1121.40,575.68 1121.80,573.50 1122.20,573.50 1122.60,575.59 1123.00,576.11 1123.40,575.50 1123.80,576.03 1124.20,576.63 1124.60,575.49 1125.00,576.45 1125.40,576.01 1125.80,576.54 1126.20,576.28 1126.60,575.62 1127.00,576.56 1127.40,575.98 1127.80,575.33 1128.20,575.31 1128.60,575.99 1129.00,575.93 1129.40,575.72 1129.80,575.50 1130.20,575.78 1130.60,575.74 1131.00,576.48 1131.40,575.30 1131.80,576.35 1132.20,576.47 1132.60,575.47 1133.00,576.60 1133.40,576.30 1133.80,576.56 1134.20,575.71 1134.60,567.90 1135.00,567.90 1135.40,567.90 1135.80,576.12 1136.20,575.80 1136.60,575.90 1137.00,575.69 1137.40,575.37 1137.80,575.44 1138.20,576.47 1138.60,510.00 1139.00,510.00 1139.40,510.00 1139.80,575.67 1140.20,576.02 1140.60,575.57 1141.00,575.82 1141.40,576.64 1141.80,576.54 1142.20,576.44 1142.60,576.18 1143.00,576.58 1143.40,576.62 1143.80,576.07 1144.20,576.31 1144.60,575.37 1145.00,576.33 1145.40,575.93 1145.80,576.35 1146.20,576.20 1146.60,575.70 1147.00,575.37 1147.40,576.60 1147.80,575.48 1148.20,575.96 1148.60,575.78 1149.00,575.72 1149.40,576.33 1149.80,576.67 1150.20,575.66 1150.60,576.22 1151.00,575.72 1151.40,576.08 1151.80,573.20 1152.20,573.20 1152.60,575.53 1153.00,575.59 1153.40,576.57 1153.80,576.00 1154.20,575.61 1154.60,576.57 1155.00,576.70 1155.40,575.93 1155.80,575.50 1156.20,575.57 1156.60,575.43 1157.00,575.78 1157.40,575.43 1157.80,575.63 1158.20,575.66 1158.60,576.10 1159.00,576.54 1159.40,576.35 1159.80,575.88 1160.20,575.88 1160.60,576.03 1161.00,575.83 1161.40,575.77 1161.80,575.39 1162.20,575.69 1162.60,573.80 1163.00,573.80 1163.40,573.80 1163.80,576.18 1164.20,576.51 1164.60,575.60 1165.00,575.68 1165.40,575.65 1165.80,575.86 1166.20,575.92 1166.60,576.64 1167.00,576.49 1167.40,576.52 1167.80,575.33 1168.20,575.35 1168.60,576.29 1169.00,576.55 1169.40,575.96 1169.80,576.12 1170.20,575.30 1170.60,572.50 1171.00,572.50 1171.40,572.50 1171.80,576.50 1172.20,576.66 1172.60,575.65 1173.00,575.45 1173.40,575.52 1173.80,573.00 1174.20,573.00 1174.60,576.62 1175.00,576.31 1175.40,576.21 1175.80,576.37 1176.20,575.94 1176.60,576.07 1177.00,575.36 1177.40,576.40 1177.80,575.63 1178.20,576.59 1178.60,576.20 1179.00,562.30 1179.40,562.30 1179.80,575.65 1180.20,576.19 1180.60,561.00 1181.00,561.00 1181.40,561.00 1181.80,576.03 1182.20,576.12 1182.40,592.90"/></g>
<g clip-path="url(#ccy)"><polyline fill="none" stroke="#0000ff" stroke-width="1.8" points="913.80,763.90 913.80,736.80 914.20,736.53 914.60,737.25 915.00,736.22 915.40,736.77 915.80,737.09 916.20,738.02 916.60,737.49 917.00,737.95 917.40,737.25 917.80,736.85 918.20,736.90 918.60,738.22 919.00,737.79 919.40,737.11 919.80,736.63 920.20,737.52 920.60,737.87 921.00,737.44 921.40,737.18 921.80,737.95 922.20,738.45 922.60,737.22 923.00,736.91 923.40,737.49 923.80,737.67 924.20,738.17 924.60,737.33 925.00,738.45 925.40,738.37 925.80,735.30 926.20,735.30 926.60,738.89 927.00,737.73 927.40,738.68 927.80,737.65 928.20,737.67 928.60,738.67 929.00,737.87 929.40,739.08 929.80,738.29 930.20,737.77 930.60,737.87 931.00,738.25 931.40,738.73 931.80,739.27 932.20,737.86 932.60,738.34 933.00,738.04 933.40,739.45 933.80,737.98 934.20,737.85 934.60,737.90 935.00,738.53 935.40,739.47 935.80,739.48 936.20,739.24 936.60,739.75 937.00,739.66 937.40,738.61 937.80,738.39 938.20,739.77 938.60,739.46 939.00,738.21 939.40,739.38 939.80,738.90 940.20,738.92 940.60,738.88 941.00,738.62 941.40,738.35 941.80,738.88 942.20,739.04 942.60,740.16 943.00,738.70 943.40,740.24 943.80,738.91 944.20,739.21 944.60,740.08 945.00,740.12 945.40,739.45 945.80,738.79 946.20,739.59 946.60,739.44 947.00,740.46 947.40,716.00 947.80,716.00 948.20,740.67 948.60,711.50 949.00,739.97 949.40,710.90 949.80,710.90 950.20,712.00 950.60,712.00 951.00,739.77 951.40,716.30 951.80,740.29 952.20,716.30 952.60,716.30 953.00,731.90 953.40,740.66 953.80,731.90 954.20,741.44 954.60,740.85 955.00,741.72 955.40,741.05 955.80,741.03 956.20,740.60 956.60,742.00 957.00,742.35 957.40,741.89 957.80,742.50 958.20,740.90 958.60,741.33 959.00,741.82 959.40,742.74 959.80,742.78 960.20,741.81 960.60,741.62 961.00,742.00 961.40,742.17 961.80,743.00 962.20,741.71 962.60,742.88 963.00,742.82 963.40,743.02 963.80,742.99 964.20,680.00 964.60,680.00 965.00,680.00 965.40,742.41 965.80,712.30 966.20,712.30 966.60,742.19 967.00,728.00 967.40,728.00 967.80,735.80 968.20,735.80 968.60,742.97 969.00,742.58 969.40,743.79 969.80,743.64 970.20,743.86 970.60,742.58 971.00,742.29 971.40,742.33 971.80,743.09 972.20,743.49 972.60,743.05 973.00,742.69 973.40,743.05 973.80,743.44 974.20,743.56 974.60,743.72 975.00,743.93 975.40,743.63 975.80,742.68 976.20,744.00 976.60,743.04 977.00,743.56 977.40,743.24 977.80,743.92 978.20,742.98 978.60,743.09 979.00,743.12 979.40,742.98 979.80,744.32 980.20,743.80 980.60,743.37 981.00,743.52 981.40,744.63 981.80,743.78 982.20,743.31 982.60,744.38 983.00,744.12 983.40,744.76 983.80,743.19 984.20,743.88 984.60,744.53 985.00,744.60 985.40,744.76 985.80,743.21 986.20,743.69 986.60,743.41 987.00,743.56 987.40,745.00 987.80,744.32 988.20,744.97 988.60,744.00 989.00,744.91 989.40,744.19 989.80,743.88 990.20,744.84 990.60,745.16 991.00,743.68 991.40,744.59 991.80,744.66 992.20,743.96 992.60,744.26 993.00,743.88 993.40,744.02 993.80,744.14 994.20,744.79 994.60,744.91 995.00,744.13 995.40,743.81 995.80,744.40 996.20,745.06 996.60,744.20 997.00,744.46 997.40,744.29 997.80,745.38 998.20,744.96 998.60,744.12 999.00,744.21 999.40,744.77 999.80,745.08 1000.20,745.26 1000.60,744.30 1001.00,744.45 1001.40,745.43 1001.80,744.94 1002.20,744.74 1002.60,744.81 1003.00,745.99 1003.40,744.86 1003.80,745.34 1004.20,744.99 1004.60,745.12 1005.00,745.95 1005.40,746.21 1005.80,745.10 1006.20,744.82 1006.60,745.80 1007.00,744.88 1007.40,744.55 1007.80,746.18 1008.20,745.35 1008.60,746.08 1009.00,745.36 1009.40,746.24 1009.80,745.51 1010.20,744.99 1010.60,744.75 1011.00,745.74 1011.40,745.93 1011.80,746.43 1012.20,744.98 1012.60,745.96 1013.00,745.53 1013.40,745.80 1013.80,745.18 1014.20,745.45 1014.60,745.90 1015.00,746.65 1015.40,745.20 1015.80,745.92 1016.20,746.50 1016.60,746.82 1017.00,745.46 1017.40,745.35 1017.80,746.85 1018.20,746.93 1018.60,746.07 1019.00,745.32 1019.40,746.91 1019.80,745.97 1020.20,746.92 1020.60,746.43 1021.00,746.82 1021.40,745.65 1021.80,746.80 1022.20,745.81 1022.60,746.16 1023.00,746.98 1023.40,746.97 1023.80,745.83 1024.20,745.92 1024.60,746.27 1025.00,746.51 1025.40,746.29 1025.80,745.84 1026.20,746.09 1026.60,746.97 1027.00,747.31 1027.40,745.79 1027.80,746.75 1028.20,747.13 1028.60,745.86 1029.00,747.32 1029.40,746.05 1029.80,746.94 1030.20,746.87 1030.60,747.03 1031.00,746.48 1031.40,746.70 1031.80,747.01 1032.20,746.75 1032.60,747.19 1033.00,746.83 1033.40,746.83 1033.80,734.60 1034.20,734.60 1034.60,746.98 1035.00,746.54 1035.40,747.52 1035.80,747.56 1036.20,747.01 1036.60,746.52 1037.00,747.07 1037.40,746.43 1037.80,746.49 1038.20,747.05 1038.60,746.46 1039.00,747.11 1039.40,747.26 1039.80,746.43 1040.20,747.52 1040.60,746.54 1041.00,747.74 1041.40,747.84 1041.80,747.38 1042.20,746.57 1042.60,747.40 1043.00,741.50 1043.40,741.50 1043.80,746.80 1044.20,748.12 1044.60,748.39 1045.00,744.00 1045.40,744.00 1045.80,747.00 1046.20,748.44 1046.60,747.58 1047.00,748.43 1047.40,748.38 1047.80,747.05 1048.20,748.19 1048.60,748.47 1049.00,746.93 1049.40,747.46 1049.80,748.21 1050.20,747.15 1050.60,748.50 1051.00,747.40 1051.40,748.40 1051.80,747.21 1052.20,747.87 1052.60,748.64 1053.00,747.38 1053.40,747.50 1053.80,747.96 1054.20,747.64 1054.60,747.15 1055.00,747.43 1055.40,747.41 1055.80,748.83 1056.20,748.39 1056.60,748.80 1057.00,747.51 1057.40,748.64 1057.80,747.45 1058.20,748.22 1058.60,748.43 1059.00,747.95 1059.40,748.89 1059.80,748.34 1060.20,748.40 1060.60,748.97 1061.00,747.59 1061.40,749.21 1061.80,748.58 1062.20,748.17 1062.60,748.92 1063.00,747.98 1063.40,749.31 1063.80,748.59 1064.20,748.22 1064.60,748.96 1065.00,748.41 1065.40,747.95 1065.80,748.99 1066.20,747.76 1066.60,747.00 1067.00,747.00 1067.40,748.89 1067.80,749.53 1068.20,748.83 1068.60,748.99 1069.00,748.38 1069.40,747.84 1069.80,747.92 1070.20,748.15 1070.60,749.01 1071.00,748.70 1071.40,748.87 1071.80,749.58 1072.20,748.22 1072.60,748.42 1073.00,749.20 1073.40,748.09 1073.80,748.07 1074.20,748.73 1074.60,748.30 1075.00,748.77 1075.40,748.56 1075.80,749.22 1076.20,749.26 1076.60,748.58 1077.00,749.36 1077.40,749.11 1077.80,748.52 1078.20,749.99 1078.60,748.76 1079.00,748.61 1079.40,748.53 1079.80,749.53 1080.20,749.97 1080.60,749.83 1081.00,749.17 1081.40,748.94 1081.80,748.51 1082.20,749.67 1082.60,749.54 1083.00,749.18 1083.40,749.73 1083.80,749.39 1084.20,750.30 1084.60,749.95 1085.00,749.10 1085.40,750.30 1085.80,748.78 1086.20,749.67 1086.60,749.47 1087.00,749.19 1087.40,748.89 1087.80,750.20 1088.20,748.84 1088.60,749.83 1089.00,750.56 1089.40,749.14 1089.80,749.27 1090.20,750.02 1090.60,749.86 1091.00,750.12 1091.40,750.45 1091.80,749.33 1092.20,749.59 1092.60,749.60 1093.00,749.17 1093.40,750.71 1093.80,750.54 1094.20,750.44 1094.60,749.19 1095.00,750.72 1095.40,750.57 1095.80,750.09 1096.20,750.61 1096.60,750.11 1097.00,749.73 1097.40,749.53 1097.80,749.79 1098.20,749.46 1098.60,750.02 1099.00,750.79 1099.40,750.71 1099.80,751.01 1100.20,750.79 1100.60,750.01 1101.00,750.55 1101.40,750.37 1101.80,751.02 1102.20,750.57 1102.60,750.13 1103.00,750.83 1103.40,751.44 1103.80,750.11 1104.20,751.33 1104.60,749.80 1105.00,750.26 1105.40,750.24 1105.80,751.18 1106.20,751.56 1106.60,751.23 1107.00,750.50 1107.40,751.52 1107.80,750.55 1108.20,750.41 1108.60,751.64 1109.00,751.17 1109.40,751.30 1109.80,751.28 1110.20,751.86 1110.60,750.97 1111.00,751.66 1111.40,751.43 1111.80,751.74 1112.20,751.01 1112.60,751.55 1113.00,751.29 1113.40,750.84 1113.80,750.70 1114.20,751.46 1114.60,750.50 1115.00,752.02 1115.40,750.67 1115.80,750.48 1116.20,750.65 1116.60,752.15 1117.00,751.12 1117.40,750.78 1117.80,750.60 1118.20,750.65 1118.60,751.85 1119.00,751.76 1119.40,751.90 1119.80,752.00 1120.20,750.81 1120.60,751.78 1121.00,751.39 1121.40,752.24 1121.80,752.26 1122.20,752.41 1122.60,750.94 1123.00,752.40 1123.40,752.50 1123.80,752.57 1124.20,751.08 1124.60,751.27 1125.00,751.12 1125.40,751.00 1125.80,752.47 1126.20,752.43 1126.60,752.12 1127.00,752.48 1127.40,752.15 1127.80,751.54 1128.20,751.22 1128.60,751.23 1129.00,752.44 1129.40,751.46 1129.80,751.68 1130.20,751.88 1130.60,751.17 1131.00,751.62 1131.40,751.68 1131.80,752.47 1132.20,751.86 1132.60,751.79 1133.00,752.97 1133.40,752.15 1133.80,752.80 1134.20,752.39 1134.60,751.35 1135.00,752.05 1135.40,752.11 1135.80,752.73 1136.20,751.98 1136.60,752.64 1137.00,752.36 1137.40,751.79 1137.80,752.97 1138.20,751.60 1138.60,752.93 1139.00,751.77 1139.40,751.48 1139.80,751.86 1140.20,752.89 1140.60,753.29 1141.00,751.55 1141.40,752.44 1141.80,752.46 1142.20,753.03 1142.60,751.94 1143.00,752.51 1143.40,752.26 1143.80,753.15 1144.20,752.14 1144.60,753.39 1145.00,752.21 1145.40,752.10 1145.80,752.99 1146.20,752.65 1146.60,751.96 1147.00,752.93 1147.40,751.94 1147.80,753.23 1148.20,753.08 1148.60,753.26 1149.00,752.99 1149.40,752.51 1149.80,752.61 1150.20,752.62 1150.60,753.52 1151.00,752.09 1151.40,753.55 1151.80,752.01 1152.20,752.36 1152.60,752.47 1153.00,753.65 1153.40,752.96 1153.80,752.76 1154.20,753.70 1154.60,752.55 1155.00,752.99 1155.40,753.14 1155.80,753.57 1156.20,753.60 1156.60,753.43 1157.00,752.92 1157.40,752.91 1157.80,752.63 1158.20,753.89 1158.60,753.59 1159.00,753.77 1159.40,752.76 1159.80,753.27 1160.20,753.90 1160.60,753.58 1161.00,752.79 1161.40,753.42 1161.80,754.21 1162.20,753.07 1162.60,753.02 1163.00,753.24 1163.40,753.99 1163.80,754.27 1164.20,753.06 1164.60,753.09 1165.00,753.28 1165.40,753.45 1165.80,753.83 1166.20,753.20 1166.60,753.53 1167.00,753.31 1167.40,754.75 1167.80,754.33 1168.20,753.23 1168.60,748.50 1169.00,748.50 1169.40,753.82 1169.80,754.93 1170.20,754.61 1170.60,749.00 1171.00,749.00 1171.40,753.61 1171.80,754.44 1172.20,753.51 1172.60,680.00 1173.00,680.00 1173.40,753.46 1173.80,754.14 1174.20,754.87 1174.60,754.72 1175.00,754.40 1175.40,754.67 1175.80,754.39 1176.20,753.84 1176.60,754.70 1177.00,754.37 1177.40,755.00 1177.80,755.33 1178.20,754.49 1178.60,754.78 1179.00,755.12 1179.40,754.56 1179.80,754.24 1180.20,755.15 1180.60,755.46 1181.00,755.30 1181.40,755.19 1181.80,755.49 1182.20,755.21"/></g>
<rect x="911.0" y="517.0" width="274.0" height="120.0" fill="none" stroke="#000" stroke-width="1.8"/>
<rect x="911.0" y="689.0" width="274.0" height="120.0" fill="none" stroke="#000" stroke-width="1.8"/>
<rect x="1115.6" y="519.7" width="66.3" height="16.0" rx="2" ry="2" fill="#ffffff" fill-opacity="0.8" stroke="#d6d6d6" stroke-width="1"/>
<line x1="1118.4" y1="527.7" x2="1140.6" y2="527.7" stroke="#0000ff" stroke-width="1.5"/>
<text transform="translate(1144.27,531.30) scale(1.2036,1)" font-size="10.20" fill="#000">y=550</text>
<rect x="1108.7" y="691.9" width="73.2" height="16.3" rx="2" ry="2" fill="#ffffff" fill-opacity="0.8" stroke="#d6d6d6" stroke-width="1"/>
<line x1="1111.4" y1="699.8" x2="1134.0" y2="699.8" stroke="#0000ff" stroke-width="1.5"/>
<text transform="translate(1137.15,703.30) scale(1.1822,1)" font-size="10.20" fill="#000">x=1024</text>
</svg></body></html>
